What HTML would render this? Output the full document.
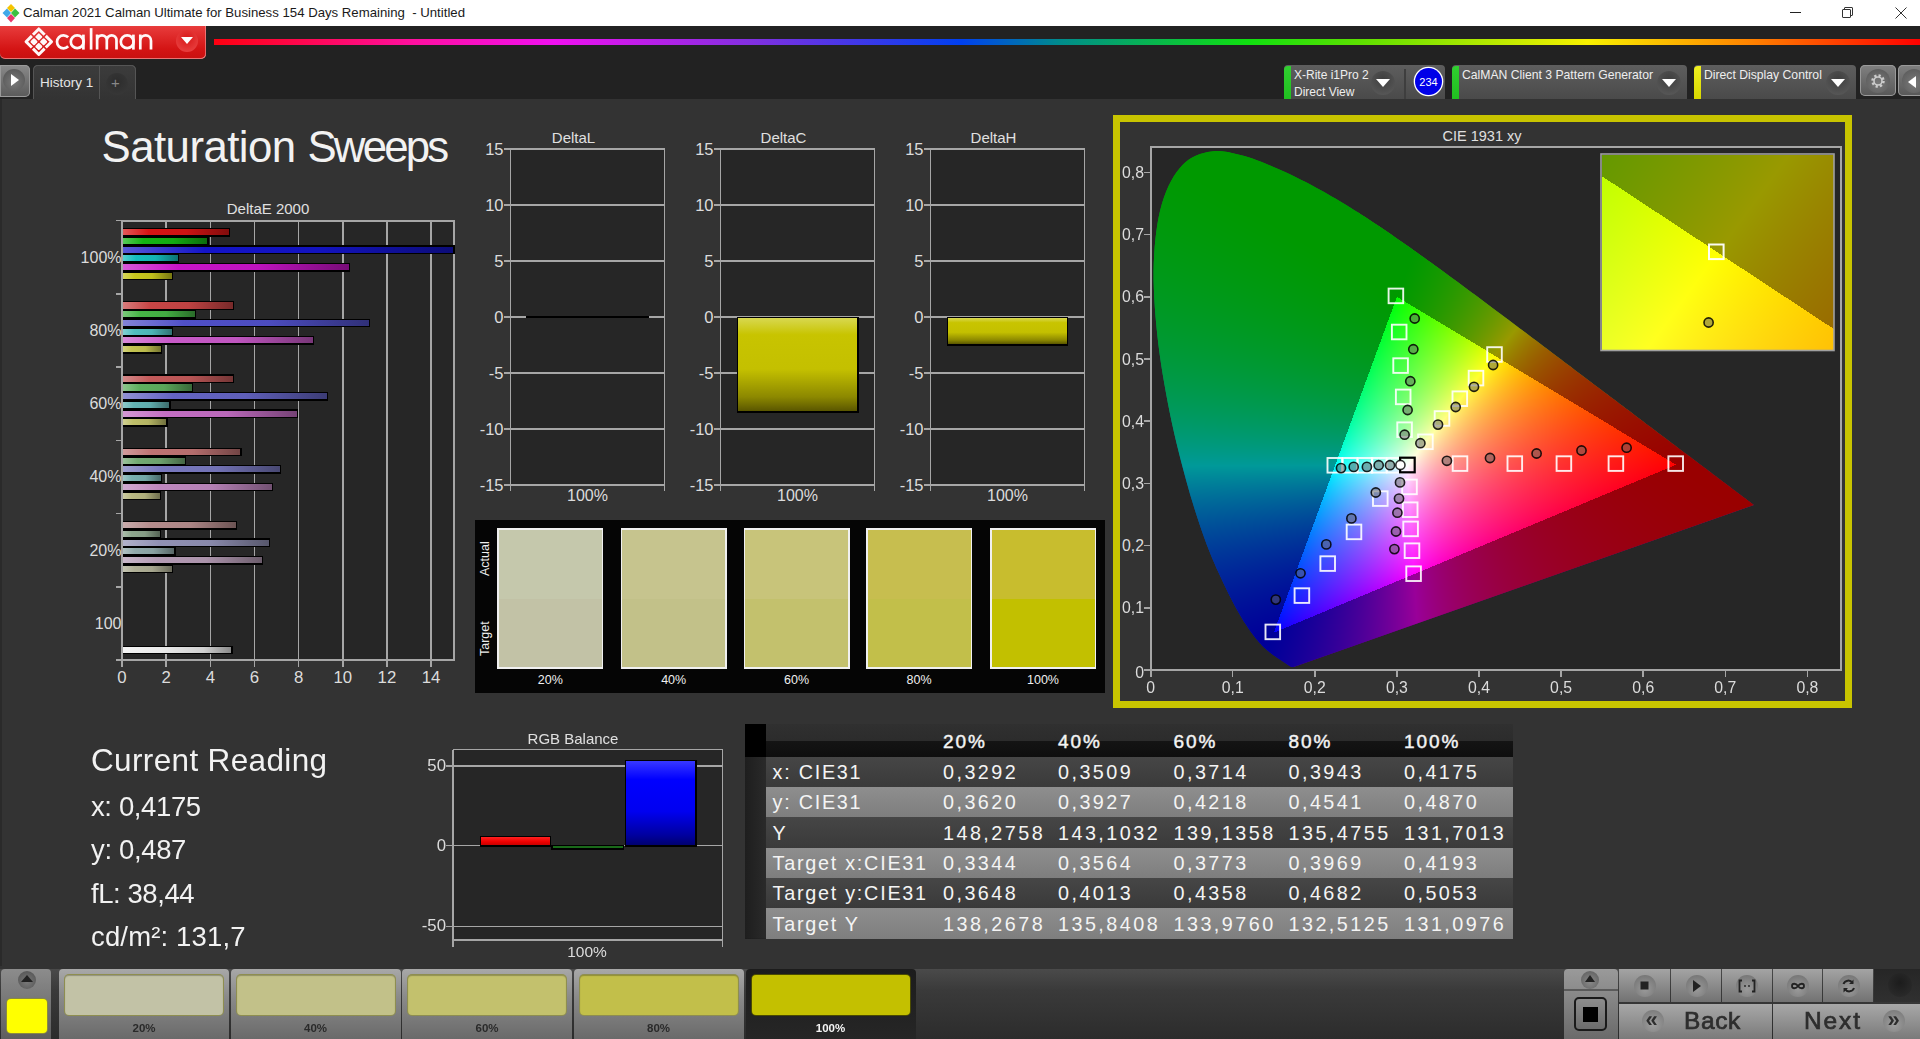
<!DOCTYPE html><html><head><meta charset="utf-8"><style>
html,body{margin:0;padding:0;width:1920px;height:1039px;overflow:hidden;background:#333;}
.t{position:absolute;font-family:"Liberation Sans",sans-serif;white-space:nowrap;line-height:1.15;}
</style></head><body>
<div style="position:absolute;left:0;top:0;width:1920px;height:26px;background:#fff;"></div>
<svg style="position:absolute;left:1px;top:2px" width="20" height="22" viewBox="0 0 20 22">
<path d="M10 2 L14 6 L10 10 L6 6Z" fill="#f5c400"/>
<path d="M14 6.5 L18.5 11 L14 15.5 L10 11Z" fill="#3cc040"/>
<path d="M10 12 L14 16 L10 20.5 L6 16Z" fill="#e8386a"/>
<path d="M6 6.5 L10 11 L6 15.5 L1.5 11Z" fill="#40a8e8"/>
</svg>
<div class="t" style="left:23px;top:5px;font-size:13.2px;color:#1a1a1a;letter-spacing:0px;white-space:pre;">Calman 2021 Calman Ultimate for Business 154 Days Remaining  - Untitled</div>
<div style="position:absolute;left:1790px;top:12px;width:11px;height:1px;background:#222"></div>
<div style="position:absolute;left:1844px;top:6.5px;width:7px;height:7px;border:1px solid #333;border-radius:1px;"></div>
<div style="position:absolute;left:1841.5px;top:9px;width:7px;height:7px;border:1px solid #333;background:#fff;border-radius:1px;"></div>
<svg style="position:absolute;left:1895px;top:6.5px" width="12" height="12"><path d="M0.5 0.5 L11.5 11.5 M11.5 0.5 L0.5 11.5" stroke="#333" stroke-width="1"/></svg>

<div style="position:absolute;left:0;top:26px;width:1920px;height:73px;background:#222;"></div>
<div style="position:absolute;left:0;top:26px;width:206px;height:33px;border-radius:0 0 5px 5px;background:linear-gradient(#e83c3c,#d41414 70%,#c81010);box-shadow:inset 0 -1px 0 rgba(255,180,180,.6), inset -1px 0 0 rgba(255,180,180,.5);"></div>
<svg style="position:absolute;left:0;top:26px" width="206" height="33" viewBox="0 26 206 33">
<g transform="translate(38.8,41.7) rotate(45) scale(1.1)" fill="#fff8f8">
<rect x="-8.2" y="-8.2" width="16.4" height="16.4" fill="none" stroke="#fff8f8" stroke-width="2.7" stroke-linejoin="round" stroke-dasharray="15.0 1.4" stroke-dashoffset="7.5" transform="translate(0,0)"/>
<rect x="-5.6" y="-5.6" width="5.0" height="5.0" rx="0.9"/>
<rect x="0.6" y="-5.6" width="5.0" height="5.0" rx="0.9"/>
<rect x="-5.6" y="0.6" width="5.0" height="5.0" rx="0.9"/>
<rect x="0.6" y="0.6" width="5.0" height="5.0" rx="0.9"/>
</g>
<g fill="none" stroke="#fff8f8" stroke-width="2.7">
<path d="M68.2 37.3 A6.5 6.5 0 1 0 68.2 46.3"/>
<circle cx="77.2" cy="41.8" r="6.4"/>
<path d="M83.4 34.6 V49.6"/>
<path d="M91.1 28.1 V49.6"/>
<path d="M97.1 34.6 V49.6 M97.1 40.2 A4.85 4.85 0 0 1 106.8 40.2 V49.6 M106.8 40.2 A4.85 4.85 0 0 1 116.5 40.2 V49.6"/>
<circle cx="127.2" cy="41.8" r="6.4"/>
<path d="M133.4 34.6 V49.6"/>
<path d="M140.3 34.6 V49.6 M140.3 40.7 A5.35 5.35 0 0 1 151 40.7 V49.6"/>
</g>
</svg>
<div style="position:absolute;left:176px;top:30px;width:22px;height:22px;border-radius:50%;background:radial-gradient(circle at 50% 40%,#d81818,#e84040 80%);"></div>
<svg style="position:absolute;left:181px;top:37px" width="12" height="8"><path d="M0 0 L12 0 L6 7Z" fill="#fff"/></svg>
<div style="position:absolute;left:214px;top:39px;width:1706px;height:6px;background:linear-gradient(90deg,#ff0010 0px,#ff10a0 200px,#f010f0 340px,#8030e0 540px,#0040f0 747px,#008c8c 846px,#10e010 1034px,#60e000 1150px,#f8f000 1374px,#ff8000 1540px,#ff0000 1706px);"></div>

<div style="position:absolute;left:0;top:65px;width:30px;height:31.5px;border-radius:0 5px 5px 0;background:linear-gradient(#8a8a8a,#5a5a5a);box-shadow:inset 0 0 0 1px #9a9a9a;"></div>
<div style="position:absolute;left:3px;top:69px;width:22px;height:22px;border-radius:50%;background:radial-gradient(circle at 50% 60%,#7a7a7a,#505050);"></div>
<svg style="position:absolute;left:11px;top:74px" width="8" height="12"><path d="M0 0 L8 6 L0 12Z" fill="#fff"/></svg>
<div style="position:absolute;left:33px;top:65px;width:103px;height:34px;border-radius:5px 5px 0 0;background:linear-gradient(#3c3c3c,#333);box-shadow:inset 0 1px 0 #555,inset 1px 0 0 #555,inset -1px 0 0 #555;"></div>
<div style="position:absolute;left:99px;top:66px;width:1px;height:33px;background:#555"></div>
<div class="t" style="left:40px;top:75px;font-size:13.5px;color:#e6e6e6;">History 1</div>
<div style="position:absolute;left:106px;top:73px;width:22px;height:22px;border-radius:50%;background:radial-gradient(circle at 50% 40%,#2c2c2c,#3a3a3a);"></div>
<div class="t" style="left:111px;top:74px;font-size:15px;color:#888;">+</div>

<div style="position:absolute;left:1284px;top:65px;width:161px;height:34px;border-radius:4px 4px 0 0;background:linear-gradient(#5e5e5e,#4a4a4a);"></div><div style="position:absolute;left:1284px;top:66px;width:7px;height:33px;border-radius:4px 0 0 0;background:linear-gradient(#30d030,#20c020);"></div>
<div class="t" style="left:1294px;top:67px;font-size:12px;color:#eee;line-height:16.5px;">X-Rite i1Pro 2<br>Direct View</div>
<div style="position:absolute;left:1371px;top:71px;width:24px;height:24px;border-radius:50%;background:radial-gradient(circle at 50% 35%,#3e3e3e,#5a5a5a 90%);"></div><svg style="position:absolute;left:1376px;top:79px" width="14" height="9"><path d="M0 0 L14 0 L7 8Z" fill="#fff"/></svg>
<div style="position:absolute;left:1404px;top:69px;width:2px;height:30px;background:#3e3e3e"></div>
<div style="position:absolute;left:1415px;top:68px;width:27px;height:27px;border-radius:50%;background:#0000e8;box-shadow:0 0 0 1.3px #fff;"></div>
<div class="t" style="left:1415px;top:75.5px;width:27px;text-align:center;font-size:11px;color:#fff;">234</div>
<div style="position:absolute;left:1452px;top:65px;width:235px;height:34px;border-radius:4px 4px 0 0;background:linear-gradient(#5e5e5e,#4a4a4a);"></div><div style="position:absolute;left:1452px;top:66px;width:7px;height:33px;border-radius:4px 0 0 0;background:linear-gradient(#30d030,#20c020);"></div>
<div class="t" style="left:1462px;top:67.5px;font-size:12.2px;color:#eee;">CalMAN Client 3 Pattern Generator</div>
<div style="position:absolute;left:1657px;top:71px;width:24px;height:24px;border-radius:50%;background:radial-gradient(circle at 50% 35%,#3e3e3e,#5a5a5a 90%);"></div><svg style="position:absolute;left:1662px;top:79px" width="14" height="9"><path d="M0 0 L14 0 L7 8Z" fill="#fff"/></svg>
<div style="position:absolute;left:1694px;top:65px;width:162px;height:34px;border-radius:4px 4px 0 0;background:linear-gradient(#5e5e5e,#4a4a4a);"></div><div style="position:absolute;left:1694px;top:66px;width:7px;height:33px;border-radius:4px 0 0 0;background:linear-gradient(#f0f020,#d8d800);"></div>
<div class="t" style="left:1704px;top:67.5px;font-size:12.2px;color:#eee;">Direct Display Control</div>
<div style="position:absolute;left:1826px;top:71px;width:24px;height:24px;border-radius:50%;background:radial-gradient(circle at 50% 35%,#3e3e3e,#5a5a5a 90%);"></div><svg style="position:absolute;left:1831px;top:79px" width="14" height="9"><path d="M0 0 L14 0 L7 8Z" fill="#fff"/></svg>
<div style="position:absolute;left:1860px;top:65px;width:36px;height:31px;border-radius:5px;background:linear-gradient(#808080,#585858);box-shadow:inset 0 0 0 1px #9a9a9a;"></div>
<div style="position:absolute;left:1866px;top:69px;width:24px;height:24px;border-radius:50%;background:radial-gradient(circle at 50% 60%,#7a7a7a,#555);"></div>
<svg style="position:absolute;left:1869px;top:72px" width="18" height="18" viewBox="0 0 18 18"><circle cx="9" cy="9" r="5.5" fill="none" stroke="#ccc" stroke-width="2.5" stroke-dasharray="2.2 2.1"/><circle cx="9" cy="9" r="4" fill="none" stroke="#ccc" stroke-width="1.6"/></svg>
<div style="position:absolute;left:1898px;top:65px;width:30px;height:31px;border-radius:5px;background:linear-gradient(#808080,#585858);box-shadow:inset 0 0 0 1px #9a9a9a;"></div>
<div style="position:absolute;left:1902px;top:69px;width:24px;height:24px;border-radius:50%;background:radial-gradient(circle at 50% 60%,#7a7a7a,#555);"></div>
<svg style="position:absolute;left:1908px;top:76px" width="8" height="12"><path d="M8 0 L0 6 L8 12Z" fill="#fff"/></svg>

<div style="position:absolute;left:0.00px;top:99.00px;width:1920.00px;height:867.00px;background:#333;"></div>
<div style="position:absolute;left:0.00px;top:99.00px;width:2.00px;height:867.00px;background:#2a2a2a;"></div>
<div class="t" style="left:101.50px;top:122.00px;font-size:43.8px;color:#f2f2f2;letter-spacing:-0.55px;">Saturation</div>
<div class="t" style="left:307.50px;top:122.00px;font-size:43.8px;color:#f2f2f2;letter-spacing:-2.85px;">Sweeps</div>
<div class="t" style="left:168.00px;top:200.00px;width:200px;text-align:center;font-size:15px;color:#e0e0e0;">DeltaE 2000</div>
<div style="position:absolute;left:122.00px;top:220.50px;width:332.00px;height:439.50px;background:#262626;"></div>
<div style="position:absolute;left:165.41px;top:220.50px;width:1.50px;height:439.50px;background:#a6a6a6;"></div>
<div style="position:absolute;left:209.57px;top:220.50px;width:1.50px;height:439.50px;background:#a6a6a6;"></div>
<div style="position:absolute;left:253.73px;top:220.50px;width:1.50px;height:439.50px;background:#a6a6a6;"></div>
<div style="position:absolute;left:297.89px;top:220.50px;width:1.50px;height:439.50px;background:#a6a6a6;"></div>
<div style="position:absolute;left:342.05px;top:220.50px;width:1.50px;height:439.50px;background:#a6a6a6;"></div>
<div style="position:absolute;left:386.21px;top:220.50px;width:1.50px;height:439.50px;background:#a6a6a6;"></div>
<div style="position:absolute;left:430.37px;top:220.50px;width:1.50px;height:439.50px;background:#a6a6a6;"></div>
<div style="position:absolute;left:122.00px;top:219.50px;width:333.00px;height:2.00px;background:#a6a6a6;"></div>
<div style="position:absolute;left:453.00px;top:220.50px;width:2.00px;height:439.50px;background:#a6a6a6;"></div>
<div style="position:absolute;left:116.00px;top:219.75px;width:6.00px;height:1.50px;background:#a6a6a6;"></div>
<div style="position:absolute;left:116.00px;top:293.00px;width:6.00px;height:1.50px;background:#a6a6a6;"></div>
<div style="position:absolute;left:116.00px;top:366.25px;width:6.00px;height:1.50px;background:#a6a6a6;"></div>
<div style="position:absolute;left:116.00px;top:439.50px;width:6.00px;height:1.50px;background:#a6a6a6;"></div>
<div style="position:absolute;left:116.00px;top:512.75px;width:6.00px;height:1.50px;background:#a6a6a6;"></div>
<div style="position:absolute;left:116.00px;top:586.00px;width:6.00px;height:1.50px;background:#a6a6a6;"></div>
<div style="position:absolute;left:116.00px;top:659.25px;width:6.00px;height:1.50px;background:#a6a6a6;"></div>
<div class="t" style="left:61.50px;top:248.62px;width:60px;text-align:right;font-size:16px;color:#dcdcdc;">100%</div>
<div class="t" style="left:61.50px;top:321.88px;width:60px;text-align:right;font-size:16px;color:#dcdcdc;">80%</div>
<div class="t" style="left:61.50px;top:395.12px;width:60px;text-align:right;font-size:16px;color:#dcdcdc;">60%</div>
<div class="t" style="left:61.50px;top:468.38px;width:60px;text-align:right;font-size:16px;color:#dcdcdc;">40%</div>
<div class="t" style="left:61.50px;top:541.62px;width:60px;text-align:right;font-size:16px;color:#dcdcdc;">20%</div>
<div class="t" style="left:61.50px;top:614.88px;width:60px;text-align:right;font-size:16px;color:#dcdcdc;">100</div>
<div style="position:absolute;left:122.00px;top:227.90px;width:108.20px;height:8.80px;background:#000;"></div>
<div style="position:absolute;left:122.00px;top:229.20px;width:106.90px;height:6.10px;background:linear-gradient(90deg,rgb(227,90,90),rgb(215,20,20) 25%,rgb(204,19,19) 60%,rgb(129,12,12));"></div>
<div style="position:absolute;left:122.00px;top:236.62px;width:86.60px;height:8.80px;background:#000;"></div>
<div style="position:absolute;left:122.00px;top:237.92px;width:85.30px;height:6.10px;background:linear-gradient(90deg,rgb(90,202,90),rgb(20,180,20) 25%,rgb(19,171,19) 60%,rgb(12,108,12));"></div>
<div style="position:absolute;left:122.00px;top:245.34px;width:332.60px;height:8.80px;background:#000;"></div>
<div style="position:absolute;left:122.00px;top:246.64px;width:331.30px;height:6.10px;background:linear-gradient(90deg,rgb(90,90,216),rgb(20,20,200) 25%,rgb(19,19,190) 60%,rgb(12,12,120));"></div>
<div style="position:absolute;left:122.00px;top:254.06px;width:56.80px;height:8.80px;background:#000;"></div>
<div style="position:absolute;left:122.00px;top:255.36px;width:55.50px;height:6.10px;background:linear-gradient(90deg,rgb(90,209,209),rgb(20,190,190) 25%,rgb(19,180,180) 60%,rgb(12,114,114));"></div>
<div style="position:absolute;left:122.00px;top:262.78px;width:228.10px;height:8.80px;background:#000;"></div>
<div style="position:absolute;left:122.00px;top:264.08px;width:226.80px;height:6.10px;background:linear-gradient(90deg,rgb(216,90,216),rgb(200,20,200) 25%,rgb(190,19,190) 60%,rgb(120,12,120));"></div>
<div style="position:absolute;left:122.00px;top:271.50px;width:51.30px;height:8.80px;background:#000;"></div>
<div style="position:absolute;left:122.00px;top:272.80px;width:50.00px;height:6.10px;background:linear-gradient(90deg,rgb(216,216,97),rgb(200,200,30) 25%,rgb(190,190,28) 60%,rgb(120,120,18));"></div>
<div style="position:absolute;left:122.00px;top:301.15px;width:112.00px;height:8.80px;background:#000;"></div>
<div style="position:absolute;left:122.00px;top:302.45px;width:110.70px;height:6.10px;background:linear-gradient(90deg,rgb(216,125,125),rgb(200,70,70) 25%,rgb(190,66,66) 60%,rgb(120,42,42));"></div>
<div style="position:absolute;left:122.00px;top:309.87px;width:74.40px;height:8.80px;background:#000;"></div>
<div style="position:absolute;left:122.00px;top:311.17px;width:73.10px;height:6.10px;background:linear-gradient(90deg,rgb(125,202,125),rgb(70,180,70) 25%,rgb(66,171,66) 60%,rgb(42,108,42));"></div>
<div style="position:absolute;left:122.00px;top:318.59px;width:248.30px;height:8.80px;background:#000;"></div>
<div style="position:absolute;left:122.00px;top:319.89px;width:247.00px;height:6.10px;background:linear-gradient(90deg,rgb(132,132,216),rgb(80,80,200) 25%,rgb(76,76,190) 60%,rgb(48,48,120));"></div>
<div style="position:absolute;left:122.00px;top:327.31px;width:51.30px;height:8.80px;background:#000;"></div>
<div style="position:absolute;left:122.00px;top:328.61px;width:50.00px;height:6.10px;background:linear-gradient(90deg,rgb(132,209,209),rgb(80,190,190) 25%,rgb(76,180,180) 60%,rgb(48,114,114));"></div>
<div style="position:absolute;left:122.00px;top:336.03px;width:192.00px;height:8.80px;background:#000;"></div>
<div style="position:absolute;left:122.00px;top:337.33px;width:190.70px;height:6.10px;background:linear-gradient(90deg,rgb(216,139,216),rgb(200,90,200) 25%,rgb(190,85,190) 60%,rgb(120,54,120));"></div>
<div style="position:absolute;left:122.00px;top:344.75px;width:40.30px;height:8.80px;background:#000;"></div>
<div style="position:absolute;left:122.00px;top:346.05px;width:39.00px;height:6.10px;background:linear-gradient(90deg,rgb(213,213,132),rgb(195,195,80) 25%,rgb(185,185,76) 60%,rgb(117,117,48));"></div>
<div style="position:absolute;left:122.00px;top:374.40px;width:112.00px;height:8.80px;background:#000;"></div>
<div style="position:absolute;left:122.00px;top:375.70px;width:110.70px;height:6.10px;background:linear-gradient(90deg,rgb(213,139,139),rgb(195,90,90) 25%,rgb(185,85,85) 60%,rgb(117,54,54));"></div>
<div style="position:absolute;left:122.00px;top:383.12px;width:71.10px;height:8.80px;background:#000;"></div>
<div style="position:absolute;left:122.00px;top:384.42px;width:69.80px;height:6.10px;background:linear-gradient(90deg,rgb(143,199,143),rgb(95,175,95) 25%,rgb(90,166,90) 60%,rgb(57,105,57));"></div>
<div style="position:absolute;left:122.00px;top:391.84px;width:206.00px;height:8.80px;background:#000;"></div>
<div style="position:absolute;left:122.00px;top:393.14px;width:204.70px;height:6.10px;background:linear-gradient(90deg,rgb(146,146,213),rgb(100,100,195) 25%,rgb(95,95,185) 60%,rgb(60,60,117));"></div>
<div style="position:absolute;left:122.00px;top:400.56px;width:48.60px;height:8.80px;background:#000;"></div>
<div style="position:absolute;left:122.00px;top:401.86px;width:47.30px;height:6.10px;background:linear-gradient(90deg,rgb(146,202,202),rgb(100,180,180) 25%,rgb(95,171,171) 60%,rgb(60,108,108));"></div>
<div style="position:absolute;left:122.00px;top:409.28px;width:175.80px;height:8.80px;background:#000;"></div>
<div style="position:absolute;left:122.00px;top:410.58px;width:174.50px;height:6.10px;background:linear-gradient(90deg,rgb(213,153,213),rgb(195,110,195) 25%,rgb(185,104,185) 60%,rgb(117,66,117));"></div>
<div style="position:absolute;left:122.00px;top:418.00px;width:45.50px;height:8.80px;background:#000;"></div>
<div style="position:absolute;left:122.00px;top:419.30px;width:44.20px;height:6.10px;background:linear-gradient(90deg,rgb(209,209,150),rgb(190,190,105) 25%,rgb(180,180,99) 60%,rgb(114,114,63));"></div>
<div style="position:absolute;left:122.00px;top:447.65px;width:119.70px;height:8.80px;background:#000;"></div>
<div style="position:absolute;left:122.00px;top:448.95px;width:118.40px;height:6.10px;background:linear-gradient(90deg,rgb(209,157,157),rgb(190,115,115) 25%,rgb(180,109,109) 60%,rgb(114,69,69));"></div>
<div style="position:absolute;left:122.00px;top:456.37px;width:64.30px;height:8.80px;background:#000;"></div>
<div style="position:absolute;left:122.00px;top:457.67px;width:63.00px;height:6.10px;background:linear-gradient(90deg,rgb(157,195,157),rgb(115,170,115) 25%,rgb(109,161,109) 60%,rgb(69,102,69));"></div>
<div style="position:absolute;left:122.00px;top:465.09px;width:159.20px;height:8.80px;background:#000;"></div>
<div style="position:absolute;left:122.00px;top:466.39px;width:157.90px;height:6.10px;background:linear-gradient(90deg,rgb(160,160,209),rgb(120,120,190) 25%,rgb(114,114,180) 60%,rgb(72,72,114));"></div>
<div style="position:absolute;left:122.00px;top:473.81px;width:40.30px;height:8.80px;background:#000;"></div>
<div style="position:absolute;left:122.00px;top:475.11px;width:39.00px;height:6.10px;background:linear-gradient(90deg,rgb(160,199,199),rgb(120,175,175) 25%,rgb(114,166,166) 60%,rgb(72,105,105));"></div>
<div style="position:absolute;left:122.00px;top:482.53px;width:151.20px;height:8.80px;background:#000;"></div>
<div style="position:absolute;left:122.00px;top:483.83px;width:149.90px;height:6.10px;background:linear-gradient(90deg,rgb(209,171,209),rgb(190,135,190) 25%,rgb(180,128,180) 60%,rgb(114,81,114));"></div>
<div style="position:absolute;left:122.00px;top:491.25px;width:39.30px;height:8.80px;background:#000;"></div>
<div style="position:absolute;left:122.00px;top:492.55px;width:38.00px;height:6.10px;background:linear-gradient(90deg,rgb(206,206,167),rgb(185,185,130) 25%,rgb(175,175,123) 60%,rgb(111,111,78));"></div>
<div style="position:absolute;left:122.00px;top:520.90px;width:114.80px;height:8.80px;background:#000;"></div>
<div style="position:absolute;left:122.00px;top:522.20px;width:113.50px;height:6.10px;background:linear-gradient(90deg,rgb(202,174,174),rgb(180,140,140) 25%,rgb(171,133,133) 60%,rgb(108,84,84));"></div>
<div style="position:absolute;left:122.00px;top:529.62px;width:39.30px;height:8.80px;background:#000;"></div>
<div style="position:absolute;left:122.00px;top:530.92px;width:38.00px;height:6.10px;background:linear-gradient(90deg,rgb(174,192,174),rgb(140,165,140) 25%,rgb(133,156,133) 60%,rgb(84,99,84));"></div>
<div style="position:absolute;left:122.00px;top:538.34px;width:148.10px;height:8.80px;background:#000;"></div>
<div style="position:absolute;left:122.00px;top:539.64px;width:146.80px;height:6.10px;background:linear-gradient(90deg,rgb(178,178,202),rgb(145,145,180) 25%,rgb(137,137,171) 60%,rgb(87,87,108));"></div>
<div style="position:absolute;left:122.00px;top:547.06px;width:53.50px;height:8.80px;background:#000;"></div>
<div style="position:absolute;left:122.00px;top:548.36px;width:52.20px;height:6.10px;background:linear-gradient(90deg,rgb(178,195,195),rgb(145,170,170) 25%,rgb(137,161,161) 60%,rgb(87,102,102));"></div>
<div style="position:absolute;left:122.00px;top:555.78px;width:141.30px;height:8.80px;background:#000;"></div>
<div style="position:absolute;left:122.00px;top:557.08px;width:140.00px;height:6.10px;background:linear-gradient(90deg,rgb(202,185,202),rgb(180,155,180) 25%,rgb(171,147,171) 60%,rgb(108,93,108));"></div>
<div style="position:absolute;left:122.00px;top:564.50px;width:51.40px;height:8.80px;background:#000;"></div>
<div style="position:absolute;left:122.00px;top:565.80px;width:50.10px;height:6.10px;background:linear-gradient(90deg,rgb(199,199,181),rgb(175,175,150) 25%,rgb(166,166,142) 60%,rgb(105,105,90));"></div>
<div style="position:absolute;left:122.00px;top:645.70px;width:111.00px;height:8.00px;background:#000;"></div>
<div style="position:absolute;left:122.00px;top:647.00px;width:109.00px;height:5.60px;background:linear-gradient(90deg,#f4f4f4,#e8e8e8 40%,#cfcfcf 75%,#8a8a8a);"></div>
<div style="position:absolute;left:121.00px;top:219.50px;width:2.00px;height:447.50px;background:#a6a6a6;"></div>
<div style="position:absolute;left:116.00px;top:659.00px;width:339.00px;height:2.00px;background:#a6a6a6;"></div>
<div style="position:absolute;left:121.25px;top:660.00px;width:1.50px;height:7.00px;background:#a6a6a6;"></div>
<div class="t" style="left:102.00px;top:668.00px;width:40px;text-align:center;font-size:16.8px;color:#dcdcdc;">0</div>
<div style="position:absolute;left:165.41px;top:660.00px;width:1.50px;height:7.00px;background:#a6a6a6;"></div>
<div class="t" style="left:146.16px;top:668.00px;width:40px;text-align:center;font-size:16.8px;color:#dcdcdc;">2</div>
<div style="position:absolute;left:209.57px;top:660.00px;width:1.50px;height:7.00px;background:#a6a6a6;"></div>
<div class="t" style="left:190.32px;top:668.00px;width:40px;text-align:center;font-size:16.8px;color:#dcdcdc;">4</div>
<div style="position:absolute;left:253.73px;top:660.00px;width:1.50px;height:7.00px;background:#a6a6a6;"></div>
<div class="t" style="left:234.48px;top:668.00px;width:40px;text-align:center;font-size:16.8px;color:#dcdcdc;">6</div>
<div style="position:absolute;left:297.89px;top:660.00px;width:1.50px;height:7.00px;background:#a6a6a6;"></div>
<div class="t" style="left:278.64px;top:668.00px;width:40px;text-align:center;font-size:16.8px;color:#dcdcdc;">8</div>
<div style="position:absolute;left:342.05px;top:660.00px;width:1.50px;height:7.00px;background:#a6a6a6;"></div>
<div class="t" style="left:322.80px;top:668.00px;width:40px;text-align:center;font-size:16.8px;color:#dcdcdc;">10</div>
<div style="position:absolute;left:386.21px;top:660.00px;width:1.50px;height:7.00px;background:#a6a6a6;"></div>
<div class="t" style="left:366.96px;top:668.00px;width:40px;text-align:center;font-size:16.8px;color:#dcdcdc;">12</div>
<div style="position:absolute;left:430.37px;top:660.00px;width:1.50px;height:7.00px;background:#a6a6a6;"></div>
<div class="t" style="left:411.12px;top:668.00px;width:40px;text-align:center;font-size:16.8px;color:#dcdcdc;">14</div>
<div style="position:absolute;left:510.50px;top:149.00px;width:154.00px;height:336.00px;background:#262626;"></div>
<div class="t" style="left:523.50px;top:129.00px;width:100px;text-align:center;font-size:15px;color:#e0e0e0;">DeltaL</div>
<div style="position:absolute;left:503.50px;top:148.25px;width:161.00px;height:1.50px;background:#a6a6a6;"></div>
<div class="t" style="left:453.50px;top:140.20px;width:50px;text-align:right;font-size:16.5px;color:#dcdcdc;">15</div>
<div style="position:absolute;left:503.50px;top:204.25px;width:161.00px;height:1.50px;background:#a6a6a6;"></div>
<div class="t" style="left:453.50px;top:196.20px;width:50px;text-align:right;font-size:16.5px;color:#dcdcdc;">10</div>
<div style="position:absolute;left:503.50px;top:260.25px;width:161.00px;height:1.50px;background:#a6a6a6;"></div>
<div class="t" style="left:453.50px;top:252.20px;width:50px;text-align:right;font-size:16.5px;color:#dcdcdc;">5</div>
<div style="position:absolute;left:503.50px;top:316.25px;width:161.00px;height:1.50px;background:#a6a6a6;"></div>
<div class="t" style="left:453.50px;top:308.20px;width:50px;text-align:right;font-size:16.5px;color:#dcdcdc;">0</div>
<div style="position:absolute;left:503.50px;top:372.25px;width:161.00px;height:1.50px;background:#a6a6a6;"></div>
<div class="t" style="left:453.50px;top:364.20px;width:50px;text-align:right;font-size:16.5px;color:#dcdcdc;">-5</div>
<div style="position:absolute;left:503.50px;top:428.25px;width:161.00px;height:1.50px;background:#a6a6a6;"></div>
<div class="t" style="left:453.50px;top:420.20px;width:50px;text-align:right;font-size:16.5px;color:#dcdcdc;">-10</div>
<div style="position:absolute;left:503.50px;top:484.25px;width:161.00px;height:1.50px;background:#a6a6a6;"></div>
<div class="t" style="left:453.50px;top:476.20px;width:50px;text-align:right;font-size:16.5px;color:#dcdcdc;">-15</div>
<div style="position:absolute;left:509.75px;top:149.00px;width:1.50px;height:342.00px;background:#a6a6a6;"></div>
<div style="position:absolute;left:663.75px;top:149.00px;width:1.50px;height:342.00px;background:#a6a6a6;"></div>
<div class="t" style="left:547.50px;top:486.50px;width:80px;text-align:center;font-size:16px;color:#dcdcdc;">100%</div>
<div style="position:absolute;left:720.50px;top:149.00px;width:154.00px;height:336.00px;background:#262626;"></div>
<div class="t" style="left:733.50px;top:129.00px;width:100px;text-align:center;font-size:15px;color:#e0e0e0;">DeltaC</div>
<div style="position:absolute;left:713.50px;top:148.25px;width:161.00px;height:1.50px;background:#a6a6a6;"></div>
<div class="t" style="left:663.50px;top:140.20px;width:50px;text-align:right;font-size:16.5px;color:#dcdcdc;">15</div>
<div style="position:absolute;left:713.50px;top:204.25px;width:161.00px;height:1.50px;background:#a6a6a6;"></div>
<div class="t" style="left:663.50px;top:196.20px;width:50px;text-align:right;font-size:16.5px;color:#dcdcdc;">10</div>
<div style="position:absolute;left:713.50px;top:260.25px;width:161.00px;height:1.50px;background:#a6a6a6;"></div>
<div class="t" style="left:663.50px;top:252.20px;width:50px;text-align:right;font-size:16.5px;color:#dcdcdc;">5</div>
<div style="position:absolute;left:713.50px;top:316.25px;width:161.00px;height:1.50px;background:#a6a6a6;"></div>
<div class="t" style="left:663.50px;top:308.20px;width:50px;text-align:right;font-size:16.5px;color:#dcdcdc;">0</div>
<div style="position:absolute;left:713.50px;top:372.25px;width:161.00px;height:1.50px;background:#a6a6a6;"></div>
<div class="t" style="left:663.50px;top:364.20px;width:50px;text-align:right;font-size:16.5px;color:#dcdcdc;">-5</div>
<div style="position:absolute;left:713.50px;top:428.25px;width:161.00px;height:1.50px;background:#a6a6a6;"></div>
<div class="t" style="left:663.50px;top:420.20px;width:50px;text-align:right;font-size:16.5px;color:#dcdcdc;">-10</div>
<div style="position:absolute;left:713.50px;top:484.25px;width:161.00px;height:1.50px;background:#a6a6a6;"></div>
<div class="t" style="left:663.50px;top:476.20px;width:50px;text-align:right;font-size:16.5px;color:#dcdcdc;">-15</div>
<div style="position:absolute;left:719.75px;top:149.00px;width:1.50px;height:342.00px;background:#a6a6a6;"></div>
<div style="position:absolute;left:873.75px;top:149.00px;width:1.50px;height:342.00px;background:#a6a6a6;"></div>
<div class="t" style="left:757.50px;top:486.50px;width:80px;text-align:center;font-size:16px;color:#dcdcdc;">100%</div>
<div style="position:absolute;left:930.50px;top:149.00px;width:154.00px;height:336.00px;background:#262626;"></div>
<div class="t" style="left:943.50px;top:129.00px;width:100px;text-align:center;font-size:15px;color:#e0e0e0;">DeltaH</div>
<div style="position:absolute;left:923.50px;top:148.25px;width:161.00px;height:1.50px;background:#a6a6a6;"></div>
<div class="t" style="left:873.50px;top:140.20px;width:50px;text-align:right;font-size:16.5px;color:#dcdcdc;">15</div>
<div style="position:absolute;left:923.50px;top:204.25px;width:161.00px;height:1.50px;background:#a6a6a6;"></div>
<div class="t" style="left:873.50px;top:196.20px;width:50px;text-align:right;font-size:16.5px;color:#dcdcdc;">10</div>
<div style="position:absolute;left:923.50px;top:260.25px;width:161.00px;height:1.50px;background:#a6a6a6;"></div>
<div class="t" style="left:873.50px;top:252.20px;width:50px;text-align:right;font-size:16.5px;color:#dcdcdc;">5</div>
<div style="position:absolute;left:923.50px;top:316.25px;width:161.00px;height:1.50px;background:#a6a6a6;"></div>
<div class="t" style="left:873.50px;top:308.20px;width:50px;text-align:right;font-size:16.5px;color:#dcdcdc;">0</div>
<div style="position:absolute;left:923.50px;top:372.25px;width:161.00px;height:1.50px;background:#a6a6a6;"></div>
<div class="t" style="left:873.50px;top:364.20px;width:50px;text-align:right;font-size:16.5px;color:#dcdcdc;">-5</div>
<div style="position:absolute;left:923.50px;top:428.25px;width:161.00px;height:1.50px;background:#a6a6a6;"></div>
<div class="t" style="left:873.50px;top:420.20px;width:50px;text-align:right;font-size:16.5px;color:#dcdcdc;">-10</div>
<div style="position:absolute;left:923.50px;top:484.25px;width:161.00px;height:1.50px;background:#a6a6a6;"></div>
<div class="t" style="left:873.50px;top:476.20px;width:50px;text-align:right;font-size:16.5px;color:#dcdcdc;">-15</div>
<div style="position:absolute;left:929.75px;top:149.00px;width:1.50px;height:342.00px;background:#a6a6a6;"></div>
<div style="position:absolute;left:1083.75px;top:149.00px;width:1.50px;height:342.00px;background:#a6a6a6;"></div>
<div class="t" style="left:967.50px;top:486.50px;width:80px;text-align:center;font-size:16px;color:#dcdcdc;">100%</div>
<div style="position:absolute;left:525.80px;top:316.00px;width:123.00px;height:2.20px;background:#000;"></div>
<div style="position:absolute;left:736.50px;top:316.50px;width:122.00px;height:96.50px;background:#000;"></div><div style="position:absolute;left:738.00px;top:317.50px;width:119.00px;height:93.50px;background:linear-gradient(#d8d850,#c8c400 18%,#c4c000 55%,#8c8800 85%,#5a5600);"></div>
<div style="position:absolute;left:946.70px;top:316.50px;width:121.80px;height:29.30px;background:#000;"></div><div style="position:absolute;left:948.20px;top:317.50px;width:118.80px;height:26.30px;background:linear-gradient(#d8d850,#c8c400 18%,#c4c000 55%,#8c8800 85%,#5a5600);"></div>
<div style="position:absolute;left:475.00px;top:520.00px;width:630.00px;height:173.00px;background:#050505;"></div>
<div class="t" style="left:477px;top:549px;width:18px;height:18px;transform:rotate(-90deg);font-size:12.5px;color:#eee;white-space:nowrap;"><span style="position:absolute;left:-9px;top:1px">Actual</span></div>
<div class="t" style="left:477px;top:629px;width:18px;height:18px;transform:rotate(-90deg);font-size:12.5px;color:#eee;white-space:nowrap;"><span style="position:absolute;left:-9px;top:1px">Target</span></div>
<div style="position:absolute;left:497.30px;top:528.30px;width:106.00px;height:141.00px;background:#f0f0f0;"></div>
<div style="position:absolute;left:498.80px;top:529.80px;width:103.00px;height:69.00px;background:#c5c8ac;"></div>
<div style="position:absolute;left:498.80px;top:598.80px;width:103.00px;height:68.70px;background:#c2c2a6;"></div>
<div class="t" style="left:500.30px;top:673.00px;width:100px;text-align:center;font-size:12.5px;color:#f0f0f0;">20%</div>
<div style="position:absolute;left:620.70px;top:528.30px;width:106.00px;height:141.00px;background:#f0f0f0;"></div>
<div style="position:absolute;left:622.20px;top:529.80px;width:103.00px;height:69.00px;background:#c6c48e;"></div>
<div style="position:absolute;left:622.20px;top:598.80px;width:103.00px;height:68.70px;background:#c2c189;"></div>
<div class="t" style="left:623.70px;top:673.00px;width:100px;text-align:center;font-size:12.5px;color:#f0f0f0;">40%</div>
<div style="position:absolute;left:743.50px;top:528.30px;width:106.00px;height:141.00px;background:#f0f0f0;"></div>
<div style="position:absolute;left:745.00px;top:529.80px;width:103.00px;height:69.00px;background:#c8c47a;"></div>
<div style="position:absolute;left:745.00px;top:598.80px;width:103.00px;height:68.70px;background:#c3c16d;"></div>
<div class="t" style="left:746.50px;top:673.00px;width:100px;text-align:center;font-size:12.5px;color:#f0f0f0;">60%</div>
<div style="position:absolute;left:866.00px;top:528.30px;width:106.00px;height:141.00px;background:#f0f0f0;"></div>
<div style="position:absolute;left:867.50px;top:529.80px;width:103.00px;height:69.00px;background:#c7be4f;"></div>
<div style="position:absolute;left:867.50px;top:598.80px;width:103.00px;height:68.70px;background:#c2bf4a;"></div>
<div class="t" style="left:869.00px;top:673.00px;width:100px;text-align:center;font-size:12.5px;color:#f0f0f0;">80%</div>
<div style="position:absolute;left:990.00px;top:528.30px;width:106.00px;height:141.00px;background:#f0f0f0;"></div>
<div style="position:absolute;left:991.50px;top:529.80px;width:103.00px;height:69.00px;background:#c8bd2e;"></div>
<div style="position:absolute;left:991.50px;top:598.80px;width:103.00px;height:68.70px;background:#c2c000;"></div>
<div class="t" style="left:993.00px;top:673.00px;width:100px;text-align:center;font-size:12.5px;color:#f0f0f0;">100%</div>
<div style="position:absolute;left:1112.50px;top:114.50px;width:739.50px;height:593.50px;box-sizing:border-box;border:7.8px solid #c8c400;background:#333;"></div>
<div class="t" style="left:1382.00px;top:128.00px;width:200px;text-align:center;font-size:14.5px;color:#e0e0e0;">CIE 1931 xy</div>
<div style="position:absolute;left:1151.00px;top:147.00px;width:690.00px;height:523.00px;background:#262626;"></div>
<svg style="position:absolute;left:0;top:0" width="1920" height="1039"><linearGradient id="lg" gradientUnits="userSpaceOnUse" x1="0" y1="150" x2="0" y2="670"><stop offset="0" stop-color="#009a00"/><stop offset="0.55" stop-color="#008c70"/><stop offset="0.62" stop-color="#006890"/><stop offset="1" stop-color="#1000b0"/></linearGradient><path d="M1293.5 666.9 L1293.5 666.9 L1293.5 666.9 L1293.5 666.9 L1293.4 666.9 L1293.4 666.9 L1293.4 666.9 L1293.3 666.9 L1293.3 667.0 L1293.2 667.0 L1293.2 667.0 L1293.2 667.0 L1293.1 667.0 L1293.1 667.0 L1293.0 667.0 L1292.9 667.0 L1292.9 667.0 L1292.8 667.0 L1292.8 667.0 L1292.7 667.0 L1292.6 667.0 L1292.6 667.0 L1292.5 667.0 L1292.4 667.0 L1292.3 667.0 L1292.2 667.0 L1292.1 667.0 L1292.0 667.0 L1291.8 666.9 L1291.7 666.9 L1291.6 666.9 L1291.4 666.9 L1291.3 666.8 L1291.2 666.8 L1291.1 666.7 L1291.0 666.7 L1290.9 666.6 L1290.8 666.6 L1290.7 666.5 L1290.5 666.5 L1290.4 666.4 L1290.3 666.3 L1290.2 666.2 L1290.0 666.2 L1289.9 666.1 L1289.7 666.0 L1289.6 665.9 L1289.4 665.8 L1289.3 665.7 L1289.1 665.6 L1288.9 665.5 L1288.7 665.4 L1288.5 665.2 L1288.3 665.1 L1288.1 664.9 L1287.9 664.8 L1287.6 664.7 L1287.4 664.5 L1287.2 664.3 L1286.9 664.2 L1286.7 664.0 L1286.4 663.8 L1286.1 663.6 L1285.9 663.4 L1285.6 663.2 L1285.3 663.0 L1285.0 662.8 L1284.6 662.6 L1284.3 662.4 L1284.0 662.2 L1283.6 661.9 L1283.3 661.7 L1282.9 661.4 L1282.5 661.1 L1282.0 660.9 L1281.6 660.6 L1281.1 660.3 L1280.7 660.0 L1280.2 659.7 L1279.7 659.3 L1279.2 659.0 L1278.6 658.6 L1278.1 658.3 L1277.6 657.9 L1277.0 657.6 L1276.4 657.2 L1275.8 656.8 L1275.2 656.3 L1274.6 655.9 L1273.9 655.4 L1273.2 654.9 L1272.6 654.4 L1271.8 653.9 L1271.1 653.4 L1270.4 652.8 L1269.6 652.2 L1268.8 651.5 L1268.0 650.9 L1267.2 650.2 L1266.4 649.5 L1265.6 648.8 L1264.7 648.0 L1263.8 647.2 L1262.8 646.2 L1261.8 645.2 L1260.8 644.1 L1259.7 642.9 L1258.6 641.7 L1257.5 640.3 L1256.3 638.9 L1255.1 637.4 L1253.8 635.8 L1252.5 634.0 L1251.1 632.2 L1249.8 630.3 L1248.3 628.3 L1246.9 626.1 L1245.4 623.8 L1243.8 621.4 L1242.2 618.8 L1240.6 616.0 L1238.9 613.0 L1237.1 609.9 L1235.3 606.7 L1233.5 603.3 L1231.6 599.6 L1229.6 595.8 L1227.6 591.8 L1225.6 587.5 L1223.4 582.9 L1221.2 578.2 L1218.9 573.3 L1216.5 568.2 L1214.2 562.8 L1211.8 557.2 L1209.4 551.3 L1207.0 545.2 L1204.6 538.7 L1202.2 532.0 L1199.8 525.0 L1197.4 517.8 L1195.0 510.3 L1192.6 502.6 L1190.2 494.7 L1187.9 486.5 L1185.5 478.1 L1183.2 469.3 L1180.8 460.3 L1178.5 451.1 L1176.2 441.8 L1174.0 432.3 L1171.9 422.8 L1169.9 413.3 L1168.0 403.7 L1166.2 394.0 L1164.4 384.1 L1162.7 374.2 L1161.1 364.2 L1159.7 354.4 L1158.4 344.6 L1157.3 335.1 L1156.4 325.7 L1155.5 316.3 L1154.8 307.0 L1154.3 297.7 L1153.9 288.7 L1153.6 279.8 L1153.6 271.1 L1153.8 262.7 L1154.2 254.5 L1154.7 246.5 L1155.5 238.6 L1156.4 230.9 L1157.5 223.5 L1158.8 216.4 L1160.3 209.7 L1162.0 203.4 L1163.9 197.4 L1166.1 191.7 L1168.4 186.3 L1171.0 181.3 L1173.7 176.6 L1176.5 172.3 L1179.5 168.4 L1182.5 164.9 L1185.7 161.9 L1189.1 159.4 L1192.7 157.2 L1196.3 155.5 L1200.1 154.0 L1203.9 152.9 L1207.7 152.0 L1211.6 151.4 L1215.5 151.0 L1219.5 151.1 L1223.6 151.5 L1227.7 152.1 L1231.9 153.0 L1236.0 153.9 L1240.2 155.0 L1244.4 156.1 L1248.5 157.3 L1252.7 158.6 L1256.9 160.2 L1261.1 161.8 L1265.3 163.5 L1269.4 165.2 L1273.5 167.0 L1277.6 168.7 L1281.6 170.5 L1285.6 172.3 L1289.6 174.1 L1293.5 176.0 L1297.4 177.9 L1301.3 179.9 L1305.1 181.8 L1309.0 183.8 L1312.8 185.9 L1316.6 187.9 L1320.4 190.0 L1324.1 192.1 L1327.9 194.3 L1331.6 196.4 L1335.4 198.6 L1339.1 200.8 L1342.8 203.1 L1346.6 205.3 L1350.3 207.6 L1354.0 210.0 L1357.7 212.3 L1361.4 214.7 L1365.1 217.1 L1368.8 219.5 L1372.5 221.9 L1376.2 224.4 L1379.9 226.8 L1383.5 229.3 L1387.2 231.8 L1390.9 234.3 L1394.5 236.9 L1398.2 239.4 L1401.9 241.9 L1405.5 244.5 L1409.2 247.1 L1412.9 249.7 L1416.5 252.3 L1420.2 254.9 L1423.9 257.5 L1427.5 260.2 L1431.2 262.8 L1434.9 265.5 L1438.5 268.1 L1442.2 270.8 L1445.9 273.5 L1449.6 276.2 L1453.2 278.9 L1456.9 281.6 L1460.6 284.3 L1464.2 287.0 L1467.9 289.7 L1471.6 292.4 L1475.2 295.1 L1478.9 297.8 L1482.5 300.6 L1486.1 303.3 L1489.8 306.0 L1493.4 308.7 L1497.1 311.4 L1500.7 314.1 L1504.4 316.9 L1508.0 319.6 L1511.6 322.3 L1515.2 325.0 L1518.8 327.7 L1522.4 330.4 L1526.0 333.1 L1529.5 335.8 L1533.1 338.4 L1536.6 341.1 L1540.2 343.8 L1543.7 346.4 L1547.2 349.1 L1550.7 351.7 L1554.2 354.4 L1557.7 357.0 L1561.1 359.6 L1564.5 362.2 L1568.0 364.8 L1571.4 367.3 L1574.7 369.9 L1578.1 372.4 L1581.5 375.0 L1584.8 377.5 L1588.1 380.0 L1591.4 382.5 L1594.6 384.9 L1597.9 387.4 L1601.1 389.8 L1604.3 392.2 L1607.5 394.6 L1610.6 396.9 L1613.7 399.3 L1616.8 401.6 L1619.8 403.9 L1622.8 406.1 L1625.8 408.4 L1628.8 410.6 L1631.7 412.8 L1634.5 415.0 L1637.4 417.2 L1640.2 419.3 L1642.9 421.3 L1645.6 423.4 L1648.2 425.4 L1650.8 427.3 L1653.3 429.2 L1655.8 431.1 L1658.2 432.9 L1660.7 434.8 L1663.0 436.5 L1665.4 438.3 L1667.7 440.0 L1670.0 441.8 L1672.2 443.5 L1674.4 445.1 L1676.6 446.8 L1678.7 448.4 L1680.8 449.9 L1682.8 451.4 L1684.7 452.9 L1686.7 454.3 L1688.5 455.7 L1690.4 457.1 L1692.1 458.4 L1693.9 459.7 L1695.6 461.0 L1697.2 462.3 L1698.8 463.5 L1700.4 464.7 L1701.9 465.8 L1703.4 466.9 L1704.8 468.0 L1706.3 469.1 L1707.6 470.1 L1709.0 471.1 L1710.3 472.1 L1711.5 473.1 L1712.7 474.0 L1713.9 474.9 L1715.1 475.8 L1716.2 476.6 L1717.3 477.4 L1718.3 478.2 L1719.4 479.0 L1720.4 479.8 L1721.3 480.5 L1722.3 481.2 L1723.2 481.9 L1724.1 482.5 L1724.9 483.2 L1725.8 483.8 L1726.6 484.5 L1727.4 485.1 L1728.2 485.6 L1728.9 486.2 L1729.7 486.8 L1730.4 487.3 L1731.1 487.9 L1731.8 488.4 L1732.5 488.9 L1733.1 489.4 L1733.8 489.9 L1734.4 490.4 L1735.0 490.8 L1735.6 491.3 L1736.2 491.7 L1736.8 492.2 L1737.3 492.6 L1737.8 493.0 L1738.3 493.3 L1738.8 493.7 L1739.3 494.1 L1739.8 494.4 L1740.3 494.8 L1740.9 495.3 L1741.6 495.8 L1742.3 496.3 L1743.0 496.9 L1743.8 497.5 L1744.6 498.0 L1745.3 498.6 L1746.0 499.1 L1746.6 499.6 L1747.2 500.0 L1747.6 500.3 L1748.1 500.7 L1748.5 501.0 L1748.8 501.2 L1749.2 501.5 L1749.6 501.8 L1749.9 502.1 L1750.3 502.4 L1750.7 502.6 L1751.1 502.9 L1751.5 503.2 L1751.8 503.5 L1752.2 503.7 L1752.5 504.0 L1752.7 504.2 L1752.9 504.3 L1753.1 504.5 L1753.3 504.6 L1753.4 504.7 L1753.5 504.8 L1753.6 504.9 L1753.7 504.9 L1753.8 505.0Z" fill="url(#lg)"/><linearGradient id="rg" gradientUnits="userSpaceOnUse" x1="1400" y1="300" x2="1700" y2="480"><stop offset="0" stop-color="#2a9000"/><stop offset="0.4" stop-color="#8a7000"/><stop offset="1" stop-color="#a00000"/></linearGradient><polygon points="1357.7,212.3 1361.4,214.7 1365.1,217.1 1368.8,219.5 1372.5,221.9 1376.2,224.4 1379.9,226.8 1383.5,229.3 1387.2,231.8 1390.9,234.3 1394.5,236.9 1398.2,239.4 1401.9,241.9 1405.5,244.5 1409.2,247.1 1412.9,249.7 1416.5,252.3 1420.2,254.9 1423.9,257.5 1427.5,260.2 1431.2,262.8 1434.9,265.5 1438.5,268.1 1442.2,270.8 1445.9,273.5 1449.6,276.2 1453.2,278.9 1456.9,281.6 1460.6,284.3 1464.2,287.0 1467.9,289.7 1471.6,292.4 1475.2,295.1 1478.9,297.8 1482.5,300.6 1486.1,303.3 1489.8,306.0 1493.4,308.7 1497.1,311.4 1500.7,314.1 1504.4,316.9 1508.0,319.6 1511.6,322.3 1515.2,325.0 1518.8,327.7 1522.4,330.4 1526.0,333.1 1529.5,335.8 1533.1,338.4 1536.6,341.1 1540.2,343.8 1543.7,346.4 1547.2,349.1 1550.7,351.7 1554.2,354.4 1557.7,357.0 1561.1,359.6 1564.5,362.2 1568.0,364.8 1571.4,367.3 1574.7,369.9 1578.1,372.4 1581.5,375.0 1584.8,377.5 1588.1,380.0 1591.4,382.5 1594.6,384.9 1597.9,387.4 1601.1,389.8 1604.3,392.2 1607.5,394.6 1610.6,396.9 1613.7,399.3 1616.8,401.6 1619.8,403.9 1622.8,406.1 1625.8,408.4 1628.8,410.6 1631.7,412.8 1634.5,415.0 1637.4,417.2 1640.2,419.3 1642.9,421.3 1645.6,423.4 1648.2,425.4 1650.8,427.3 1653.3,429.2 1655.8,431.1 1658.2,432.9 1660.7,434.8 1663.0,436.5 1665.4,438.3 1667.7,440.0 1670.0,441.8 1672.2,443.5 1674.4,445.1 1676.6,446.8 1678.7,448.4 1680.8,449.9 1682.8,451.4 1684.7,452.9 1686.7,454.3 1688.5,455.7 1690.4,457.1 1692.1,458.4 1693.9,459.7 1695.6,461.0 1697.2,462.3 1698.8,463.5 1700.4,464.7 1701.9,465.8 1703.4,466.9 1704.8,468.0 1706.3,469.1 1707.6,470.1 1709.0,471.1 1710.3,472.1 1711.5,473.1 1712.7,474.0 1713.9,474.9 1715.1,475.8 1716.2,476.6 1717.3,477.4 1718.3,478.2 1719.4,479.0 1720.4,479.8 1721.3,480.5 1722.3,481.2 1723.2,481.9 1724.1,482.5 1724.9,483.2 1725.8,483.8 1726.6,484.5 1727.4,485.1 1728.2,485.6 1728.9,486.2 1729.7,486.8 1730.4,487.3 1731.1,487.9 1731.8,488.4 1732.5,488.9 1733.1,489.4 1733.8,489.9 1734.4,490.4 1735.0,490.8 1735.6,491.3 1736.2,491.7 1736.8,492.2 1737.3,492.6 1737.8,493.0 1738.3,493.3 1738.8,493.7 1739.3,494.1 1739.8,494.4 1740.3,494.8 1740.9,495.3 1741.6,495.8 1742.3,496.3 1743.0,496.9 1743.8,497.5 1744.6,498.0 1745.3,498.6 1746.0,499.1 1746.6,499.6 1747.2,500.0 1747.6,500.3 1748.1,500.7 1748.5,501.0 1748.8,501.2 1749.2,501.5 1749.6,501.8 1749.9,502.1 1750.3,502.4 1750.7,502.6 1751.1,502.9 1751.5,503.2 1751.8,503.5 1752.2,503.7 1752.5,504.0 1752.7,504.2 1752.9,504.3 1753.1,504.5 1753.3,504.6 1753.4,504.7 1753.5,504.8 1753.6,504.9 1753.7,504.9 1753.8,505.0 1676.0,464.7 1396.9,296.8" fill="url(#rg)"/><polygon points="1273.8,632.7 1676.0,464.7 1753.8,505.0 1293.5,666.9" fill="#800050"/><linearGradient id="gffd000" gradientUnits="userSpaceOnUse" x1="1407.3" y1="465.4" x2="1536.5" y2="380.8"><stop offset="0" stop-color="#fff"/><stop offset="1" stop-color="#ffd000"/></linearGradient><polygon points="1407.3,465.4 1676.0,464.7 1396.9,296.8" fill="url(#gffd000)"/><linearGradient id="g00ffd0" gradientUnits="userSpaceOnUse" x1="1407.3" y1="465.4" x2="1335.3" y2="464.7"><stop offset="0" stop-color="#fff"/><stop offset="1" stop-color="#00ffd0"/></linearGradient><polygon points="1407.3,465.4 1396.9,296.8 1273.8,632.7" fill="url(#g00ffd0)"/><linearGradient id="gff00c0" gradientUnits="userSpaceOnUse" x1="1407.3" y1="465.4" x2="1474.9" y2="548.7"><stop offset="0" stop-color="#fff"/><stop offset="1" stop-color="#ff00c0"/></linearGradient><polygon points="1407.3,465.4 1273.8,632.7 1676.0,464.7" fill="url(#gff00c0)"/></svg>
<canvas id="cv" width="690" height="523" style="position:absolute;left:1151px;top:147px;"></canvas>
<div style="position:absolute;left:1150.00px;top:146.00px;width:692.00px;height:1.60px;background:#a6a6a6;"></div>
<div style="position:absolute;left:1840.40px;top:146.00px;width:1.60px;height:524.00px;background:#a6a6a6;"></div>
<div style="position:absolute;left:1150.00px;top:146.00px;width:2.00px;height:531.00px;background:#a6a6a6;"></div>
<div style="position:absolute;left:1144.00px;top:669.00px;width:698.00px;height:2.00px;background:#a6a6a6;"></div>
<div style="position:absolute;left:1149.80px;top:670.00px;width:1.60px;height:7.00px;background:#a6a6a6;"></div>
<div class="t" style="left:1125.60px;top:679.00px;width:50px;text-align:center;font-size:15.8px;color:#dcdcdc;">0</div>
<div style="position:absolute;left:1144.00px;top:669.20px;width:7.00px;height:1.60px;background:#a6a6a6;"></div>
<div class="t" style="left:1094.00px;top:663.50px;width:50px;text-align:right;font-size:15.8px;color:#dcdcdc;">0</div>
<div style="position:absolute;left:1231.90px;top:670.00px;width:1.60px;height:7.00px;background:#a6a6a6;"></div>
<div class="t" style="left:1207.70px;top:679.00px;width:50px;text-align:center;font-size:15.8px;color:#dcdcdc;">0,1</div>
<div style="position:absolute;left:1144.00px;top:607.00px;width:7.00px;height:1.60px;background:#a6a6a6;"></div>
<div class="t" style="left:1094.00px;top:599.30px;width:50px;text-align:right;font-size:15.8px;color:#dcdcdc;">0,1</div>
<div style="position:absolute;left:1314.00px;top:670.00px;width:1.60px;height:7.00px;background:#a6a6a6;"></div>
<div class="t" style="left:1289.80px;top:679.00px;width:50px;text-align:center;font-size:15.8px;color:#dcdcdc;">0,2</div>
<div style="position:absolute;left:1144.00px;top:544.80px;width:7.00px;height:1.60px;background:#a6a6a6;"></div>
<div class="t" style="left:1094.00px;top:537.10px;width:50px;text-align:right;font-size:15.8px;color:#dcdcdc;">0,2</div>
<div style="position:absolute;left:1396.10px;top:670.00px;width:1.60px;height:7.00px;background:#a6a6a6;"></div>
<div class="t" style="left:1371.90px;top:679.00px;width:50px;text-align:center;font-size:15.8px;color:#dcdcdc;">0,3</div>
<div style="position:absolute;left:1144.00px;top:482.60px;width:7.00px;height:1.60px;background:#a6a6a6;"></div>
<div class="t" style="left:1094.00px;top:474.90px;width:50px;text-align:right;font-size:15.8px;color:#dcdcdc;">0,3</div>
<div style="position:absolute;left:1478.20px;top:670.00px;width:1.60px;height:7.00px;background:#a6a6a6;"></div>
<div class="t" style="left:1454.00px;top:679.00px;width:50px;text-align:center;font-size:15.8px;color:#dcdcdc;">0,4</div>
<div style="position:absolute;left:1144.00px;top:420.40px;width:7.00px;height:1.60px;background:#a6a6a6;"></div>
<div class="t" style="left:1094.00px;top:412.70px;width:50px;text-align:right;font-size:15.8px;color:#dcdcdc;">0,4</div>
<div style="position:absolute;left:1560.30px;top:670.00px;width:1.60px;height:7.00px;background:#a6a6a6;"></div>
<div class="t" style="left:1536.10px;top:679.00px;width:50px;text-align:center;font-size:15.8px;color:#dcdcdc;">0,5</div>
<div style="position:absolute;left:1144.00px;top:358.20px;width:7.00px;height:1.60px;background:#a6a6a6;"></div>
<div class="t" style="left:1094.00px;top:350.50px;width:50px;text-align:right;font-size:15.8px;color:#dcdcdc;">0,5</div>
<div style="position:absolute;left:1642.40px;top:670.00px;width:1.60px;height:7.00px;background:#a6a6a6;"></div>
<div class="t" style="left:1618.20px;top:679.00px;width:50px;text-align:center;font-size:15.8px;color:#dcdcdc;">0,6</div>
<div style="position:absolute;left:1144.00px;top:296.00px;width:7.00px;height:1.60px;background:#a6a6a6;"></div>
<div class="t" style="left:1094.00px;top:288.30px;width:50px;text-align:right;font-size:15.8px;color:#dcdcdc;">0,6</div>
<div style="position:absolute;left:1724.50px;top:670.00px;width:1.60px;height:7.00px;background:#a6a6a6;"></div>
<div class="t" style="left:1700.30px;top:679.00px;width:50px;text-align:center;font-size:15.8px;color:#dcdcdc;">0,7</div>
<div style="position:absolute;left:1144.00px;top:233.80px;width:7.00px;height:1.60px;background:#a6a6a6;"></div>
<div class="t" style="left:1094.00px;top:226.10px;width:50px;text-align:right;font-size:15.8px;color:#dcdcdc;">0,7</div>
<div style="position:absolute;left:1806.60px;top:670.00px;width:1.60px;height:7.00px;background:#a6a6a6;"></div>
<div class="t" style="left:1782.40px;top:679.00px;width:50px;text-align:center;font-size:15.8px;color:#dcdcdc;">0,8</div>
<div style="position:absolute;left:1144.00px;top:171.60px;width:7.00px;height:1.60px;background:#a6a6a6;"></div>
<div class="t" style="left:1094.00px;top:163.90px;width:50px;text-align:right;font-size:15.8px;color:#dcdcdc;">0,8</div>
<div style="position:absolute;left:1601.8px;top:154.8px;width:232px;height:195px;background:linear-gradient(33deg,#d0ff00 0%,#ffff10 30%,#ffd000 49.6%,#8a8a00 50%,#8a7a00 100%);"></div>
<canvas id="cv2" width="232" height="195" style="position:absolute;left:1601.8px;top:154.8px;"></canvas>
<svg style="position:absolute;left:0;top:0" width="1920" height="1039"><rect x="1452.7" y="456.3" width="14.6" height="14.6" fill="none" stroke="rgba(255,255,255,0.9)" stroke-width="1.9"/><rect x="1507.5" y="456.3" width="14.6" height="14.6" fill="none" stroke="rgba(255,255,255,0.9)" stroke-width="1.9"/><rect x="1556.6" y="456.3" width="14.6" height="14.6" fill="none" stroke="rgba(255,255,255,0.9)" stroke-width="1.9"/><rect x="1608.6" y="456.3" width="14.6" height="14.6" fill="none" stroke="rgba(255,255,255,0.9)" stroke-width="1.9"/><rect x="1668.4" y="456.3" width="14.6" height="14.6" fill="none" stroke="rgba(255,255,255,0.9)" stroke-width="1.9"/><rect x="1397.3" y="422.4" width="14.6" height="14.6" fill="none" stroke="rgba(255,255,255,0.9)" stroke-width="1.9"/><rect x="1395.9" y="389.6" width="14.6" height="14.6" fill="none" stroke="rgba(255,255,255,0.9)" stroke-width="1.9"/><rect x="1393.3" y="358.3" width="14.6" height="14.6" fill="none" stroke="rgba(255,255,255,0.9)" stroke-width="1.9"/><rect x="1391.9" y="324.7" width="14.6" height="14.6" fill="none" stroke="rgba(255,255,255,0.9)" stroke-width="1.9"/><rect x="1388.6" y="288.6" width="14.6" height="14.6" fill="none" stroke="rgba(255,255,255,0.9)" stroke-width="1.9"/><rect x="1373.0" y="491.3" width="14.6" height="14.6" fill="none" stroke="rgba(255,255,255,0.9)" stroke-width="1.9"/><rect x="1346.7" y="524.6" width="14.6" height="14.6" fill="none" stroke="rgba(255,255,255,0.9)" stroke-width="1.9"/><rect x="1320.4" y="556.3" width="14.6" height="14.6" fill="none" stroke="rgba(255,255,255,0.9)" stroke-width="1.9"/><rect x="1294.6" y="588.3" width="14.6" height="14.6" fill="none" stroke="rgba(255,255,255,0.9)" stroke-width="1.9"/><rect x="1265.5" y="624.6" width="14.6" height="14.6" fill="none" stroke="rgba(255,255,255,0.9)" stroke-width="1.9"/><rect x="1387.1" y="458.0" width="14.6" height="14.6" fill="none" stroke="rgba(255,255,255,0.9)" stroke-width="1.9"/><rect x="1371.9" y="458.0" width="14.6" height="14.6" fill="none" stroke="rgba(255,255,255,0.9)" stroke-width="1.9"/><rect x="1357.7" y="458.0" width="14.6" height="14.6" fill="none" stroke="rgba(255,255,255,0.9)" stroke-width="1.9"/><rect x="1342.7" y="458.0" width="14.6" height="14.6" fill="none" stroke="rgba(255,255,255,0.9)" stroke-width="1.9"/><rect x="1327.5" y="458.0" width="14.6" height="14.6" fill="none" stroke="rgba(255,255,255,0.9)" stroke-width="1.9"/><rect x="1402.2" y="479.6" width="14.6" height="14.6" fill="none" stroke="rgba(255,255,255,0.9)" stroke-width="1.9"/><rect x="1402.9" y="502.4" width="14.6" height="14.6" fill="none" stroke="rgba(255,255,255,0.9)" stroke-width="1.9"/><rect x="1403.3" y="521.6" width="14.6" height="14.6" fill="none" stroke="rgba(255,255,255,0.9)" stroke-width="1.9"/><rect x="1404.7" y="543.4" width="14.6" height="14.6" fill="none" stroke="rgba(255,255,255,0.9)" stroke-width="1.9"/><rect x="1406.3" y="566.4" width="14.6" height="14.6" fill="none" stroke="rgba(255,255,255,0.9)" stroke-width="1.9"/><rect x="1418.1" y="434.5" width="14.6" height="14.6" fill="none" stroke="rgba(255,255,255,0.9)" stroke-width="1.9"/><rect x="1434.7" y="411.2" width="14.6" height="14.6" fill="none" stroke="rgba(255,255,255,0.9)" stroke-width="1.9"/><rect x="1452.5" y="391.4" width="14.6" height="14.6" fill="none" stroke="rgba(255,255,255,0.9)" stroke-width="1.9"/><rect x="1468.7" y="370.8" width="14.6" height="14.6" fill="none" stroke="rgba(255,255,255,0.9)" stroke-width="1.9"/><rect x="1487.2" y="347.2" width="14.6" height="14.6" fill="none" stroke="rgba(255,255,255,0.9)" stroke-width="1.9"/><rect x="1400.1" y="457.7" width="14.6" height="14.6" fill="none" stroke="#000" stroke-width="2.2"/><circle cx="1446.9" cy="460.8" r="4.6" fill="rgba(96,96,96,0.5)" stroke="rgba(0,0,0,0.85)" stroke-width="1.6"/><circle cx="1490" cy="458" r="4.6" fill="rgba(96,96,96,0.5)" stroke="rgba(0,0,0,0.85)" stroke-width="1.6"/><circle cx="1536.6" cy="453.5" r="4.6" fill="rgba(96,96,96,0.5)" stroke="rgba(0,0,0,0.85)" stroke-width="1.6"/><circle cx="1581.5" cy="450.5" r="4.6" fill="rgba(96,96,96,0.5)" stroke="rgba(0,0,0,0.85)" stroke-width="1.6"/><circle cx="1626.6" cy="447.7" r="4.6" fill="rgba(96,96,96,0.5)" stroke="rgba(0,0,0,0.85)" stroke-width="1.6"/><circle cx="1404.6" cy="434.7" r="4.6" fill="rgba(96,96,96,0.5)" stroke="rgba(0,0,0,0.85)" stroke-width="1.6"/><circle cx="1407.6" cy="410" r="4.6" fill="rgba(96,96,96,0.5)" stroke="rgba(0,0,0,0.85)" stroke-width="1.6"/><circle cx="1410.3" cy="381.2" r="4.6" fill="rgba(96,96,96,0.5)" stroke="rgba(0,0,0,0.85)" stroke-width="1.6"/><circle cx="1413.3" cy="349.2" r="4.6" fill="rgba(96,96,96,0.5)" stroke="rgba(0,0,0,0.85)" stroke-width="1.6"/><circle cx="1414.7" cy="318.5" r="4.6" fill="rgba(96,96,96,0.5)" stroke="rgba(0,0,0,0.85)" stroke-width="1.6"/><circle cx="1375.8" cy="492.5" r="4.6" fill="rgba(96,96,96,0.5)" stroke="rgba(0,0,0,0.85)" stroke-width="1.6"/><circle cx="1351.4" cy="518.4" r="4.6" fill="rgba(96,96,96,0.5)" stroke="rgba(0,0,0,0.85)" stroke-width="1.6"/><circle cx="1326.3" cy="544.4" r="4.6" fill="rgba(96,96,96,0.5)" stroke="rgba(0,0,0,0.85)" stroke-width="1.6"/><circle cx="1300.5" cy="573.3" r="4.6" fill="rgba(96,96,96,0.5)" stroke="rgba(0,0,0,0.85)" stroke-width="1.6"/><circle cx="1275.8" cy="599.6" r="4.6" fill="rgba(96,96,96,0.5)" stroke="rgba(0,0,0,0.85)" stroke-width="1.6"/><circle cx="1390" cy="465.2" r="4.6" fill="rgba(96,96,96,0.5)" stroke="rgba(0,0,0,0.85)" stroke-width="1.6"/><circle cx="1378.7" cy="465.2" r="4.6" fill="rgba(96,96,96,0.5)" stroke="rgba(0,0,0,0.85)" stroke-width="1.6"/><circle cx="1366.9" cy="466.9" r="4.6" fill="rgba(96,96,96,0.5)" stroke="rgba(0,0,0,0.85)" stroke-width="1.6"/><circle cx="1353.7" cy="466.9" r="4.6" fill="rgba(96,96,96,0.5)" stroke="rgba(0,0,0,0.85)" stroke-width="1.6"/><circle cx="1341" cy="468.1" r="4.6" fill="rgba(96,96,96,0.5)" stroke="rgba(0,0,0,0.85)" stroke-width="1.6"/><circle cx="1400" cy="482.4" r="4.6" fill="rgba(96,96,96,0.5)" stroke="rgba(0,0,0,0.85)" stroke-width="1.6"/><circle cx="1399" cy="498.6" r="4.6" fill="rgba(96,96,96,0.5)" stroke="rgba(0,0,0,0.85)" stroke-width="1.6"/><circle cx="1397.4" cy="512.7" r="4.6" fill="rgba(96,96,96,0.5)" stroke="rgba(0,0,0,0.85)" stroke-width="1.6"/><circle cx="1396" cy="531.5" r="4.6" fill="rgba(96,96,96,0.5)" stroke="rgba(0,0,0,0.85)" stroke-width="1.6"/><circle cx="1394.4" cy="549.1" r="4.6" fill="rgba(96,96,96,0.5)" stroke="rgba(0,0,0,0.85)" stroke-width="1.6"/><circle cx="1420.4" cy="443.2" r="4.6" fill="rgba(96,96,96,0.5)" stroke="rgba(0,0,0,0.85)" stroke-width="1.6"/><circle cx="1438" cy="424.6" r="4.6" fill="rgba(96,96,96,0.5)" stroke="rgba(0,0,0,0.85)" stroke-width="1.6"/><circle cx="1455.7" cy="407" r="4.6" fill="rgba(96,96,96,0.5)" stroke="rgba(0,0,0,0.85)" stroke-width="1.6"/><circle cx="1474" cy="386.8" r="4.6" fill="rgba(96,96,96,0.5)" stroke="rgba(0,0,0,0.85)" stroke-width="1.6"/><circle cx="1493.1" cy="365" r="4.6" fill="rgba(96,96,96,0.5)" stroke="rgba(0,0,0,0.85)" stroke-width="1.6"/><circle cx="1400.4" cy="465" r="4.6" fill="#fff" stroke="rgba(0,0,0,0.8)" stroke-width="1.6"/><rect x="1601" y="154" width="233" height="196.5" fill="none" stroke="#a0a0a0" stroke-width="1.6"/><rect x="1709" y="244.5" width="14.6" height="14.6" fill="none" stroke="rgba(255,255,255,0.95)" stroke-width="2"/><circle cx="1708.6" cy="322.5" r="4.6" fill="rgba(96,96,96,0.5)" stroke="rgba(0,0,0,0.85)" stroke-width="1.6"/></svg>
<div class="t" style="left:91.00px;top:742.00px;font-size:31.5px;color:#f2f2f2;letter-spacing:0.35px;">Current Reading</div>
<div class="t" style="left:91.00px;top:791.00px;font-size:27.5px;color:#f2f2f2;letter-spacing:-0.38px;">x: 0,4175</div>
<div class="t" style="left:91.00px;top:834.30px;font-size:27.5px;color:#f2f2f2;letter-spacing:-0.35px;">y: 0,487</div>
<div class="t" style="left:91.00px;top:877.60px;font-size:27.5px;color:#f2f2f2;letter-spacing:-0.43px;">fL: 38,44</div>
<div class="t" style="left:91.00px;top:920.90px;font-size:27.5px;color:#f2f2f2;letter-spacing:0.15px;">cd/m²: 131,7</div>
<div class="t" style="left:473.00px;top:729.50px;width:200px;text-align:center;font-size:15px;color:#e0e0e0;">RGB Balance</div>
<div style="position:absolute;left:453.00px;top:749.50px;width:269.50px;height:190.50px;background:#262626;"></div>
<div style="position:absolute;left:453.00px;top:748.70px;width:269.50px;height:1.60px;background:#a6a6a6;"></div>
<div style="position:absolute;left:452.20px;top:749.50px;width:1.60px;height:197.50px;background:#a6a6a6;"></div>
<div style="position:absolute;left:721.70px;top:749.50px;width:1.60px;height:197.50px;background:#a6a6a6;"></div>
<div style="position:absolute;left:453.00px;top:939.20px;width:269.50px;height:1.60px;background:#a6a6a6;"></div>
<div style="position:absolute;left:446.00px;top:765.40px;width:276.50px;height:1.60px;background:#a6a6a6;"></div>
<div class="t" style="left:398.00px;top:756.20px;width:48px;text-align:right;font-size:16.8px;color:#dcdcdc;">50</div>
<div style="position:absolute;left:446.00px;top:844.80px;width:276.50px;height:1.60px;background:#a6a6a6;"></div>
<div class="t" style="left:398.00px;top:835.60px;width:48px;text-align:right;font-size:16.8px;color:#dcdcdc;">0</div>
<div style="position:absolute;left:446.00px;top:925.50px;width:276.50px;height:1.60px;background:#a6a6a6;"></div>
<div class="t" style="left:398.00px;top:916.30px;width:48px;text-align:right;font-size:16.8px;color:#dcdcdc;">-50</div>
<div style="position:absolute;left:479.80px;top:835.50px;width:71.50px;height:11.00px;background:#000;"></div>
<div style="position:absolute;left:481.00px;top:836.70px;width:69.20px;height:8.50px;background:linear-gradient(#ff2020,#ee0000 60%,#c80000);"></div>
<div style="position:absolute;left:551.30px;top:845.00px;width:72.40px;height:4.50px;background:#000;"></div>
<div style="position:absolute;left:552.50px;top:845.80px;width:70.00px;height:2.50px;background:#1a6a1a;"></div>
<div style="position:absolute;left:625.00px;top:760.00px;width:71.50px;height:86.50px;background:#000;"></div>
<div style="position:absolute;left:626.20px;top:761.20px;width:69.20px;height:84.00px;background:linear-gradient(#3838ff,#0000ff 22%,#0000f0 60%,#0000a0 88%,#000070);"></div>
<div class="t" style="left:547.00px;top:943.00px;width:80px;text-align:center;font-size:15.5px;color:#dcdcdc;">100%</div>
<div style="position:absolute;left:745.00px;top:724.00px;width:21.00px;height:214.50px;background:linear-gradient(90deg,#1c1c1c,#262626);"></div>
<div style="position:absolute;left:745.00px;top:724.00px;width:21.00px;height:32.60px;background:#000;"></div>
<div style="position:absolute;left:766.00px;top:724.00px;width:747.00px;height:32.60px;background:linear-gradient(#303030 0,#2c2c2c 50%,#141414 52%,#0e0e0e 100%);"></div>
<div class="t" style="left:943.00px;top:731.00px;font-size:19px;color:#f4f4f4;letter-spacing:1.9px;-webkit-text-stroke:0.45px #f4f4f4;">20%</div>
<div class="t" style="left:1058.00px;top:731.00px;font-size:19px;color:#f4f4f4;letter-spacing:1.9px;-webkit-text-stroke:0.45px #f4f4f4;">40%</div>
<div class="t" style="left:1173.50px;top:731.00px;font-size:19px;color:#f4f4f4;letter-spacing:1.9px;-webkit-text-stroke:0.45px #f4f4f4;">60%</div>
<div class="t" style="left:1288.50px;top:731.00px;font-size:19px;color:#f4f4f4;letter-spacing:1.9px;-webkit-text-stroke:0.45px #f4f4f4;">80%</div>
<div class="t" style="left:1404.00px;top:731.00px;font-size:19px;color:#f4f4f4;letter-spacing:1.9px;-webkit-text-stroke:0.45px #f4f4f4;">100%</div>
<div style="position:absolute;left:766.00px;top:756.60px;width:747.00px;height:30.52px;background:linear-gradient(#464646,#3a3a3a);"></div>
<div style="position:absolute;left:745.00px;top:756.60px;width:21.00px;height:30.32px;background:linear-gradient(90deg,#1e1e1e,#2a2a2a);"></div>
<div class="t" style="left:772.50px;top:761.10px;font-size:19.8px;color:#f4f4f4;letter-spacing:1.75px;">x: CIE31</div>
<div class="t" style="left:943.00px;top:761.10px;font-size:19.8px;color:#f4f4f4;letter-spacing:2.45px;">0,3292</div>
<div class="t" style="left:1058.00px;top:761.10px;font-size:19.8px;color:#f4f4f4;letter-spacing:2.45px;">0,3509</div>
<div class="t" style="left:1173.50px;top:761.10px;font-size:19.8px;color:#f4f4f4;letter-spacing:2.45px;">0,3714</div>
<div class="t" style="left:1288.50px;top:761.10px;font-size:19.8px;color:#f4f4f4;letter-spacing:2.45px;">0,3943</div>
<div class="t" style="left:1404.00px;top:761.10px;font-size:19.8px;color:#f4f4f4;letter-spacing:2.45px;">0,4175</div>
<div style="position:absolute;left:766.00px;top:786.92px;width:747.00px;height:30.52px;background:linear-gradient(#8e8e8e,#7e7e7e);"></div>
<div style="position:absolute;left:745.00px;top:786.92px;width:21.00px;height:30.32px;background:linear-gradient(90deg,#1e1e1e,#2a2a2a);"></div>
<div class="t" style="left:772.50px;top:791.42px;font-size:19.8px;color:#f4f4f4;letter-spacing:1.75px;">y: CIE31</div>
<div class="t" style="left:943.00px;top:791.42px;font-size:19.8px;color:#f4f4f4;letter-spacing:2.45px;">0,3620</div>
<div class="t" style="left:1058.00px;top:791.42px;font-size:19.8px;color:#f4f4f4;letter-spacing:2.45px;">0,3927</div>
<div class="t" style="left:1173.50px;top:791.42px;font-size:19.8px;color:#f4f4f4;letter-spacing:2.45px;">0,4218</div>
<div class="t" style="left:1288.50px;top:791.42px;font-size:19.8px;color:#f4f4f4;letter-spacing:2.45px;">0,4541</div>
<div class="t" style="left:1404.00px;top:791.42px;font-size:19.8px;color:#f4f4f4;letter-spacing:2.45px;">0,4870</div>
<div style="position:absolute;left:766.00px;top:817.23px;width:747.00px;height:30.52px;background:linear-gradient(#464646,#3a3a3a);"></div>
<div style="position:absolute;left:745.00px;top:817.23px;width:21.00px;height:30.32px;background:linear-gradient(90deg,#1e1e1e,#2a2a2a);"></div>
<div class="t" style="left:772.50px;top:821.73px;font-size:19.8px;color:#f4f4f4;letter-spacing:1.75px;">Y</div>
<div class="t" style="left:943.00px;top:821.73px;font-size:19.8px;color:#f4f4f4;letter-spacing:2.45px;">148,2758</div>
<div class="t" style="left:1058.00px;top:821.73px;font-size:19.8px;color:#f4f4f4;letter-spacing:2.45px;">143,1032</div>
<div class="t" style="left:1173.50px;top:821.73px;font-size:19.8px;color:#f4f4f4;letter-spacing:2.45px;">139,1358</div>
<div class="t" style="left:1288.50px;top:821.73px;font-size:19.8px;color:#f4f4f4;letter-spacing:2.45px;">135,4755</div>
<div class="t" style="left:1404.00px;top:821.73px;font-size:19.8px;color:#f4f4f4;letter-spacing:2.45px;">131,7013</div>
<div style="position:absolute;left:766.00px;top:847.55px;width:747.00px;height:30.52px;background:linear-gradient(#8e8e8e,#7e7e7e);"></div>
<div style="position:absolute;left:745.00px;top:847.55px;width:21.00px;height:30.32px;background:linear-gradient(90deg,#1e1e1e,#2a2a2a);"></div>
<div class="t" style="left:772.50px;top:852.05px;font-size:19.8px;color:#f4f4f4;letter-spacing:1.75px;">Target x:CIE31</div>
<div class="t" style="left:943.00px;top:852.05px;font-size:19.8px;color:#f4f4f4;letter-spacing:2.45px;">0,3344</div>
<div class="t" style="left:1058.00px;top:852.05px;font-size:19.8px;color:#f4f4f4;letter-spacing:2.45px;">0,3564</div>
<div class="t" style="left:1173.50px;top:852.05px;font-size:19.8px;color:#f4f4f4;letter-spacing:2.45px;">0,3773</div>
<div class="t" style="left:1288.50px;top:852.05px;font-size:19.8px;color:#f4f4f4;letter-spacing:2.45px;">0,3969</div>
<div class="t" style="left:1404.00px;top:852.05px;font-size:19.8px;color:#f4f4f4;letter-spacing:2.45px;">0,4193</div>
<div style="position:absolute;left:766.00px;top:877.87px;width:747.00px;height:30.52px;background:linear-gradient(#464646,#3a3a3a);"></div>
<div style="position:absolute;left:745.00px;top:877.87px;width:21.00px;height:30.32px;background:linear-gradient(90deg,#1e1e1e,#2a2a2a);"></div>
<div class="t" style="left:772.50px;top:882.37px;font-size:19.8px;color:#f4f4f4;letter-spacing:1.75px;">Target y:CIE31</div>
<div class="t" style="left:943.00px;top:882.37px;font-size:19.8px;color:#f4f4f4;letter-spacing:2.45px;">0,3648</div>
<div class="t" style="left:1058.00px;top:882.37px;font-size:19.8px;color:#f4f4f4;letter-spacing:2.45px;">0,4013</div>
<div class="t" style="left:1173.50px;top:882.37px;font-size:19.8px;color:#f4f4f4;letter-spacing:2.45px;">0,4358</div>
<div class="t" style="left:1288.50px;top:882.37px;font-size:19.8px;color:#f4f4f4;letter-spacing:2.45px;">0,4682</div>
<div class="t" style="left:1404.00px;top:882.37px;font-size:19.8px;color:#f4f4f4;letter-spacing:2.45px;">0,5053</div>
<div style="position:absolute;left:766.00px;top:908.18px;width:747.00px;height:30.52px;background:linear-gradient(#8e8e8e,#7e7e7e);"></div>
<div style="position:absolute;left:745.00px;top:908.18px;width:21.00px;height:30.32px;background:linear-gradient(90deg,#1e1e1e,#2a2a2a);"></div>
<div class="t" style="left:772.50px;top:912.68px;font-size:19.8px;color:#f4f4f4;letter-spacing:1.75px;">Target Y</div>
<div class="t" style="left:943.00px;top:912.68px;font-size:19.8px;color:#f4f4f4;letter-spacing:2.45px;">138,2678</div>
<div class="t" style="left:1058.00px;top:912.68px;font-size:19.8px;color:#f4f4f4;letter-spacing:2.45px;">135,8408</div>
<div class="t" style="left:1173.50px;top:912.68px;font-size:19.8px;color:#f4f4f4;letter-spacing:2.45px;">133,9760</div>
<div class="t" style="left:1288.50px;top:912.68px;font-size:19.8px;color:#f4f4f4;letter-spacing:2.45px;">132,5125</div>
<div class="t" style="left:1404.00px;top:912.68px;font-size:19.8px;color:#f4f4f4;letter-spacing:2.45px;">131,0976</div>
<div style="position:absolute;left:0.00px;top:968.50px;width:1920.00px;height:70.50px;background:linear-gradient(#4a4a4a,#3a3a3a 30%,#2c2c2c);"></div>
<div style="position:absolute;left:1.00px;top:969.00px;width:50.00px;height:70.00px;border-radius:4px 4px 0 0;background:linear-gradient(#8c8c8c,#5e5e5e);"></div>
<div style="position:absolute;left:18.00px;top:971.00px;width:18.00px;height:18.00px;border-radius:50%;background:radial-gradient(circle at 50% 60%,#7a7a7a,#4e4e4e);"></div>
<svg style="position:absolute;left:21px;top:975px" width="12" height="8"><path d="M0 7 L6 0 L12 7Z" fill="#222"/></svg>
<div style="position:absolute;left:7.00px;top:998.50px;width:39.50px;height:34.00px;border-radius:4px;background:#ffff00;box-shadow:0 0 0 1px #8a8a40;"></div>
<div style="position:absolute;left:59.00px;top:969.00px;width:170.00px;height:70.00px;border-radius:4px 4px 0 0;background:linear-gradient(#a8a8a8,#8a8a8a 40%,#6a6a6a);"></div>
<div style="position:absolute;left:65.00px;top:975.00px;width:158.00px;height:40.00px;border-radius:4px;background:#c2c2a6;box-shadow:0 0 0 1px #8e8e50, inset 0 1px 1px rgba(0,0,0,.25);"></div>
<div class="t" style="left:59.00px;top:1021.50px;width:170px;text-align:center;font-size:11.5px;color:#2a2a2a;font-weight:bold;">20%</div>
<div style="position:absolute;left:230.50px;top:969.00px;width:170.00px;height:70.00px;border-radius:4px 4px 0 0;background:linear-gradient(#a8a8a8,#8a8a8a 40%,#6a6a6a);"></div>
<div style="position:absolute;left:236.50px;top:975.00px;width:158.00px;height:40.00px;border-radius:4px;background:#c2c189;box-shadow:0 0 0 1px #8e8e50, inset 0 1px 1px rgba(0,0,0,.25);"></div>
<div class="t" style="left:230.50px;top:1021.50px;width:170px;text-align:center;font-size:11.5px;color:#2a2a2a;font-weight:bold;">40%</div>
<div style="position:absolute;left:402.00px;top:969.00px;width:170.00px;height:70.00px;border-radius:4px 4px 0 0;background:linear-gradient(#a8a8a8,#8a8a8a 40%,#6a6a6a);"></div>
<div style="position:absolute;left:408.00px;top:975.00px;width:158.00px;height:40.00px;border-radius:4px;background:#c3c16d;box-shadow:0 0 0 1px #8e8e50, inset 0 1px 1px rgba(0,0,0,.25);"></div>
<div class="t" style="left:402.00px;top:1021.50px;width:170px;text-align:center;font-size:11.5px;color:#2a2a2a;font-weight:bold;">60%</div>
<div style="position:absolute;left:573.50px;top:969.00px;width:170.00px;height:70.00px;border-radius:4px 4px 0 0;background:linear-gradient(#a8a8a8,#8a8a8a 40%,#6a6a6a);"></div>
<div style="position:absolute;left:579.50px;top:975.00px;width:158.00px;height:40.00px;border-radius:4px;background:#c2bf4a;box-shadow:0 0 0 1px #8e8e50, inset 0 1px 1px rgba(0,0,0,.25);"></div>
<div class="t" style="left:573.50px;top:1021.50px;width:170px;text-align:center;font-size:11.5px;color:#2a2a2a;font-weight:bold;">80%</div>
<div style="position:absolute;left:745.50px;top:969.00px;width:170.00px;height:70.00px;border-radius:4px 4px 0 0;background:linear-gradient(#1c1c1c,#262626);"></div>
<div style="position:absolute;left:751.50px;top:975.00px;width:158.00px;height:40.00px;border-radius:4px;background:#c4c000;box-shadow:0 0 0 1px #4a4a00;"></div>
<div class="t" style="left:745.50px;top:1021.50px;width:170px;text-align:center;font-size:11.5px;color:#f4f4f4;font-weight:bold;">100%</div>
<div style="position:absolute;left:1563.50px;top:969.00px;width:54.00px;height:70.00px;border-radius:4px 4px 0 0;background:linear-gradient(#9a9a9a,#6a6a6a);"></div>
<div style="position:absolute;left:1563.50px;top:989.00px;width:54.00px;height:1.50px;background:#5a5a5a;"></div>
<div style="position:absolute;left:1581.00px;top:971.00px;width:18.00px;height:18.00px;border-radius:50%;background:radial-gradient(circle at 50% 60%,#8a8a8a,#5a5a5a);"></div>
<svg style="position:absolute;left:1585px;top:975px" width="10" height="7"><path d="M0 7 L5 0 L10 7Z" fill="#222"/></svg>
<div style="position:absolute;left:1573.50px;top:997.00px;width:33.50px;height:33.50px;box-sizing:border-box;border:2.5px solid #1a1a1a;border-radius:5px;background:linear-gradient(#8c8c8c,#6c6c6c);"></div>
<div style="position:absolute;left:1582.50px;top:1006.50px;width:15.50px;height:15.00px;background:#000;"></div>
<div style="position:absolute;left:1619.00px;top:969.00px;width:51.00px;height:33.00px;background:linear-gradient(#a4a4a4,#727272);"></div>
<div style="position:absolute;left:1634.00px;top:974.50px;width:22.00px;height:22.00px;border-radius:50%;background:radial-gradient(circle at 50% 65%,#9a9a9a,#6e6e6e);"></div>
<div style="position:absolute;left:1671.00px;top:969.00px;width:50.00px;height:33.00px;background:linear-gradient(#a4a4a4,#727272);"></div>
<div style="position:absolute;left:1685.50px;top:974.50px;width:22.00px;height:22.00px;border-radius:50%;background:radial-gradient(circle at 50% 65%,#9a9a9a,#6e6e6e);"></div>
<div style="position:absolute;left:1722.00px;top:969.00px;width:49.60px;height:33.00px;background:linear-gradient(#a4a4a4,#727272);"></div>
<div style="position:absolute;left:1736.30px;top:974.50px;width:22.00px;height:22.00px;border-radius:50%;background:radial-gradient(circle at 50% 65%,#9a9a9a,#6e6e6e);"></div>
<div style="position:absolute;left:1772.60px;top:969.00px;width:49.70px;height:33.00px;background:linear-gradient(#a4a4a4,#727272);"></div>
<div style="position:absolute;left:1786.95px;top:974.50px;width:22.00px;height:22.00px;border-radius:50%;background:radial-gradient(circle at 50% 65%,#9a9a9a,#6e6e6e);"></div>
<div style="position:absolute;left:1823.30px;top:969.00px;width:49.70px;height:33.00px;background:linear-gradient(#a4a4a4,#727272);"></div>
<div style="position:absolute;left:1837.65px;top:974.50px;width:22.00px;height:22.00px;border-radius:50%;background:radial-gradient(circle at 50% 65%,#9a9a9a,#6e6e6e);"></div>
<svg style="position:absolute;left:0;top:0" width="1920" height="1039"><rect x="1640.5" y="981.5" width="8" height="8" fill="#222"/><path d="M1693 980 L1701 986 L1693 992Z" fill="#222"/><path d="M1742 980.5 h-2.5 v11 h2.5 M1752 980.5 h2.5 v11 h-2.5" stroke="#222" stroke-width="1.8" fill="none"/><circle cx="1745" cy="986" r="0.9" fill="#222"/><circle cx="1749" cy="986" r="0.9" fill="#222"/><path d="M1798 986 c-2 -3 -6 -3 -6 0 c0 3 4 3 6 0 c2 -3 6 -3 6 0 c0 3 -4 3 -6 0z" stroke="#222" stroke-width="1.8" fill="none"/><path d="M1843.5 984 a5 5 0 0 1 9 -1 M1854 988 a5 5 0 0 1 -9 1" stroke="#222" stroke-width="2" fill="none"/><path d="M1853.5 979.5 v4.5 h-4.5z M1843.5 992.5 v-4.5 h4.5z" fill="#222"/></svg>
<div style="position:absolute;left:1874.00px;top:969.00px;width:46.00px;height:33.00px;background:linear-gradient(#262626,#303030);"></div>
<div style="position:absolute;left:1888.00px;top:973.00px;width:24.00px;height:24.00px;border-radius:50%;background:radial-gradient(circle at 50% 40%,#1c1c1c,#2e2e2e);"></div>
<div style="position:absolute;left:1619.00px;top:1004.00px;width:152.50px;height:35.00px;background:linear-gradient(#a8a8a8,#7a7a7a);"></div>
<div style="position:absolute;left:1772.50px;top:1004.00px;width:147.50px;height:35.00px;background:linear-gradient(#a8a8a8,#7a7a7a);"></div>
<div style="position:absolute;left:1642.00px;top:1010.00px;width:22.00px;height:22.00px;border-radius:50%;background:radial-gradient(circle at 50% 65%,#a0a0a0,#747474);"></div>
<div style="position:absolute;left:1883.00px;top:1010.00px;width:22.00px;height:22.00px;border-radius:50%;background:radial-gradient(circle at 50% 65%,#a0a0a0,#747474);"></div>
<div class="t" style="left:1645.50px;top:1007.00px;font-size:22px;color:#2e2e2e;font-weight:bold;">«</div>
<div class="t" style="left:1887.50px;top:1007.00px;font-size:22px;color:#2e2e2e;font-weight:bold;">»</div>
<div class="t" style="left:1684.00px;top:1006.50px;font-size:24.5px;color:#2e2e2e;letter-spacing:0.6px;-webkit-text-stroke:0.7px #2e2e2e;">Back</div>
<div class="t" style="left:1804.00px;top:1006.50px;font-size:24.5px;color:#2e2e2e;letter-spacing:1.9px;-webkit-text-stroke:0.7px #2e2e2e;">Next</div>
<script>
(function(){
var L=[[0.1741, 0.005], [0.17408, 0.00499], [0.17405, 0.00498], [0.17402, 0.00497], [0.17398, 0.00496], [0.17394, 0.00494], [0.1739, 0.00493], [0.17385, 0.00491], [0.1738, 0.0049], [0.17375, 0.00489], [0.17369, 0.00487], [0.17364, 0.00486], [0.17358, 0.00484], [0.17351, 0.00483], [0.17344, 0.00482], [0.17337, 0.00481], [0.1733, 0.0048], [0.17323, 0.00479], [0.17315, 0.00479], [0.17307, 0.00478], [0.17299, 0.00477], [0.17291, 0.00477], [0.17281, 0.00478], [0.17271, 0.00478], [0.1726, 0.0048], [0.17247, 0.00482], [0.17233, 0.00484], [0.17218, 0.00487], [0.17203, 0.00491], [0.17186, 0.00495], [0.1717, 0.00499], [0.17155, 0.00504], [0.1714, 0.0051], [0.17126, 0.00517], [0.17112, 0.00524], [0.17099, 0.00532], [0.17086, 0.0054], [0.17073, 0.00549], [0.17059, 0.00559], [0.17045, 0.00569], [0.1703, 0.0058], [0.17014, 0.00591], [0.16999, 0.00603], [0.16982, 0.00616], [0.16966, 0.00629], [0.16948, 0.00643], [0.1693, 0.00657], [0.16911, 0.00673], [0.1689, 0.0069], [0.16868, 0.00708], [0.16845, 0.00727], [0.16822, 0.00747], [0.16797, 0.00767], [0.16771, 0.00789], [0.16745, 0.00812], [0.16718, 0.00835], [0.1669, 0.0086], [0.16662, 0.00885], [0.16633, 0.00912], [0.16603, 0.00939], [0.16573, 0.00968], [0.16542, 0.00997], [0.16509, 0.01027], [0.16475, 0.01058], [0.1644, 0.0109], [0.16403, 0.01123], [0.16366, 0.01156], [0.16327, 0.0119], [0.16287, 0.01225], [0.16246, 0.01261], [0.16203, 0.01299], [0.16158, 0.01339], [0.1611, 0.0138], [0.1606, 0.01423], [0.16009, 0.01468], [0.15955, 0.01514], [0.15899, 0.01562], [0.15842, 0.01611], [0.15783, 0.01662], [0.15722, 0.01715], [0.1566, 0.0177], [0.15596, 0.01826], [0.15531, 0.01883], [0.15464, 0.01941], [0.15396, 0.02001], [0.15325, 0.02063], [0.15252, 0.02128], [0.15177, 0.02197], [0.151, 0.0227], [0.1502, 0.02346], [0.14938, 0.02423], [0.14854, 0.02504], [0.14768, 0.02588], [0.1468, 0.02675], [0.14589, 0.02768], [0.14496, 0.02866], [0.144, 0.0297], [0.14303, 0.03077], [0.14205, 0.03184], [0.14105, 0.03295], [0.14002, 0.03412], [0.13897, 0.03537], [0.13786, 0.03673], [0.13671, 0.03823], [0.1355, 0.0399], [0.13423, 0.04169], [0.13293, 0.04357], [0.13157, 0.04556], [0.13018, 0.04767], [0.12873, 0.04994], [0.12724, 0.05236], [0.12569, 0.05498], [0.1241, 0.0578], [0.12246, 0.06078], [0.12078, 0.06387], [0.11906, 0.06712], [0.11728, 0.07055], [0.11545, 0.0742], [0.11356, 0.0781], [0.11162, 0.08229], [0.1096, 0.0868], [0.10752, 0.09158], [0.10539, 0.09657], [0.1032, 0.1018], [0.10096, 0.10731], [0.09864, 0.11313], [0.09627, 0.11928], [0.09382, 0.12579], [0.0913, 0.1327], [0.08869, 0.13996], [0.08597, 0.14753], [0.08317, 0.15543], [0.08031, 0.16367], [0.07742, 0.1723], [0.0745, 0.18133], [0.07159, 0.19079], [0.0687, 0.2007], [0.06581, 0.21107], [0.06289, 0.22188], [0.05995, 0.23311], [0.05701, 0.24474], [0.05407, 0.25677], [0.05114, 0.26916], [0.04825, 0.28191], [0.0454, 0.295], [0.04255, 0.30854], [0.03967, 0.32259], [0.03679, 0.33707], [0.03395, 0.35189], [0.03117, 0.36695], [0.02848, 0.38216], [0.02591, 0.39744], [0.0235, 0.4127], [0.0212, 0.42809], [0.01895, 0.44378], [0.0168, 0.45966], [0.01475, 0.47563], [0.01284, 0.49159], [0.0111, 0.50744], [0.00954, 0.52308], [0.0082, 0.5384], [0.00704, 0.55354], [0.00602, 0.56865], [0.00515, 0.58365], [0.00447, 0.59849], [0.00398, 0.6131], [0.00371, 0.62739], [0.00368, 0.64132], [0.0039, 0.6548], [0.00436, 0.66796], [0.00504, 0.68091], [0.00594, 0.69359], [0.00707, 0.70591], [0.00842, 0.71781], [0.01001, 0.7292], [0.01183, 0.74003], [0.0139, 0.7502], [0.01624, 0.75981], [0.01885, 0.76895], [0.02172, 0.77759], [0.02481, 0.7857], [0.0281, 0.79323], [0.03157, 0.80015], [0.03517, 0.80642], [0.0389, 0.812], [0.0428, 0.81684], [0.04691, 0.82095], [0.05122, 0.8244], [0.05567, 0.82724], [0.06024, 0.82954], [0.06489, 0.83135], [0.06959, 0.83276], [0.0743, 0.8338], [0.07907, 0.83434], [0.08394, 0.83426], [0.08891, 0.83366], [0.09393, 0.83263], [0.099, 0.83127], [0.10408, 0.82968], [0.10915, 0.82796], [0.1142, 0.8262], [0.11925, 0.8243], [0.12434, 0.82211], [0.12944, 0.81969], [0.13456, 0.81709], [0.13965, 0.81436], [0.14472, 0.81155], [0.14974, 0.80872], [0.1547, 0.8059], [0.1596, 0.80307], [0.16445, 0.80018], [0.16926, 0.79721], [0.17404, 0.79419], [0.17879, 0.79111], [0.18351, 0.78798], [0.18821, 0.78481], [0.1929, 0.7816], [0.19756, 0.77835], [0.20219, 0.77505], [0.20679, 0.7717], [0.21137, 0.76831], [0.21594, 0.76487], [0.2205, 0.76139], [0.22505, 0.75786], [0.2296, 0.7543], [0.23415, 0.75069], [0.23869, 0.74704], [0.24323, 0.74334], [0.24776, 0.73959], [0.25228, 0.73582], [0.25679, 0.732], [0.2613, 0.72816], [0.2658, 0.7243], [0.27029, 0.72041], [0.27478, 0.71647], [0.27926, 0.71251], [0.28373, 0.70851], [0.2882, 0.70449], [0.29267, 0.70045], [0.29713, 0.69638], [0.3016, 0.6923], [0.30607, 0.6882], [0.31053, 0.68407], [0.31499, 0.67992], [0.31945, 0.67575], [0.32391, 0.67156], [0.32837, 0.66735], [0.33283, 0.66313], [0.3373, 0.6589], [0.34177, 0.65465], [0.34625, 0.65038], [0.35073, 0.6461], [0.35521, 0.64179], [0.35969, 0.63748], [0.36416, 0.63316], [0.36863, 0.62883], [0.3731, 0.6245], [0.37756, 0.62016], [0.38202, 0.61581], [0.38647, 0.61145], [0.39093, 0.60708], [0.39537, 0.60271], [0.39982, 0.59834], [0.40426, 0.59397], [0.4087, 0.5896], [0.41314, 0.58523], [0.41758, 0.58087], [0.42202, 0.57649], [0.42646, 0.57212], [0.43089, 0.56776], [0.4353, 0.5634], [0.43971, 0.55904], [0.4441, 0.5547], [0.44848, 0.55036], [0.45285, 0.54603], [0.45721, 0.54169], [0.46156, 0.53737], [0.46589, 0.53305], [0.47021, 0.52875], [0.47452, 0.52447], [0.4788, 0.5202], [0.48307, 0.51595], [0.48733, 0.5117], [0.49157, 0.50747], [0.4958, 0.50326], [0.50001, 0.49906], [0.5042, 0.49488], [0.50836, 0.49073], [0.5125, 0.4866], [0.51662, 0.48249], [0.52072, 0.4784], [0.5248, 0.47433], [0.52886, 0.47029], [0.53289, 0.46627], [0.53689, 0.46228], [0.54086, 0.45832], [0.5448, 0.4544], [0.54871, 0.45051], [0.5526, 0.44665], [0.55646, 0.44282], [0.56029, 0.43902], [0.56408, 0.43525], [0.56783, 0.43153], [0.57154, 0.42784], [0.5752, 0.4242], [0.57882, 0.42059], [0.5824, 0.41701], [0.58594, 0.41347], [0.58944, 0.40996], [0.59289, 0.40651], [0.59629, 0.40311], [0.59963, 0.39977], [0.6029, 0.3965], [0.6061, 0.3933], [0.60925, 0.39017], [0.61233, 0.3871], [0.61536, 0.38409], [0.61833, 0.38112], [0.62126, 0.37821], [0.62415, 0.37534], [0.627, 0.3725], [0.62981, 0.3697], [0.63259, 0.36693], [0.63532, 0.36421], [0.63801, 0.36154], [0.64064, 0.35891], [0.64322, 0.35635], [0.64574, 0.35384], [0.6482, 0.3514], [0.65059, 0.34903], [0.65293, 0.34672], [0.65521, 0.34447], [0.65743, 0.34227], [0.6596, 0.34014], [0.66172, 0.33805], [0.66378, 0.336], [0.6658, 0.334], [0.66777, 0.33204], [0.66968, 0.33014], [0.67153, 0.32828], [0.67334, 0.32648], [0.67509, 0.32471], [0.67681, 0.323], [0.67847, 0.32133], [0.6801, 0.3197], [0.68168, 0.31812], [0.68321, 0.31659], [0.68469, 0.31511], [0.68613, 0.31367], [0.68752, 0.31227], [0.68888, 0.31091], [0.6902, 0.30959], [0.6915, 0.3083], [0.69276, 0.30705], [0.69398, 0.30584], [0.69516, 0.30467], [0.69631, 0.30354], [0.69742, 0.30245], [0.69851, 0.30137], [0.69956, 0.30033], [0.7006, 0.2993], [0.70161, 0.2983], [0.70258, 0.29733], [0.70352, 0.29639], [0.70444, 0.29547], [0.70533, 0.29457], [0.7062, 0.2937], [0.70706, 0.29284], [0.7079, 0.292], [0.70873, 0.29117], [0.70954, 0.29036], [0.71032, 0.28958], [0.71109, 0.28881], [0.71185, 0.28805], [0.71258, 0.28732], [0.7133, 0.2866], [0.714, 0.2859], [0.71466, 0.28524], [0.71528, 0.28462], [0.71587, 0.28403], [0.71644, 0.28345], [0.71703, 0.28287], [0.71764, 0.28226], [0.71829, 0.28161], [0.719, 0.2809], [0.7198, 0.28011], [0.72068, 0.27924], [0.72161, 0.27832], [0.72256, 0.27739], [0.72351, 0.27646], [0.72441, 0.27557], [0.72525, 0.27474], [0.726, 0.274], [0.72665, 0.27336], [0.72722, 0.27278], [0.72775, 0.27226], [0.72823, 0.27178], [0.72868, 0.27133], [0.72911, 0.27089], [0.72955, 0.27045], [0.73, 0.27], [0.73047, 0.26953], [0.73094, 0.26906], [0.73141, 0.26859], [0.73187, 0.26813], [0.73231, 0.26769], [0.73271, 0.26729], [0.73308, 0.26692], [0.7334, 0.2666], [0.73367, 0.26633], [0.7339, 0.2661], [0.7341, 0.2659], [0.73426, 0.26574], [0.7344, 0.2656], [0.73452, 0.26548], [0.73461, 0.26539], [0.7347, 0.2653]];
function rgb(x,y,inside){
  var X=x/y,Z=(1-x-y)/y;
  var r=3.2406*X-1.5372-0.4986*Z, g=-0.9689*X+1.8758+0.0415*Z, b=0.0557*X-0.2040+1.0570*Z;
  var ins = r>=0&&g>=0&&b>=0;
  if(r<0)r=0; if(g<0)g=0; if(b<0)b=0;
  var m=Math.max(r,g,b); r/=m; g/=m; b/=m;
  function gm(v){return v<=0.0031308?12.92*v:1.055*Math.pow(v,1/2.4)-0.055;}
  if(ins){ return [Math.pow(r,1/1.2)*255,Math.pow(g,1/1.2)*255,Math.pow(b,1/1.2)*255]; }
  var k=0.6;
  return [Math.pow(r,1.15)*255*k, Math.pow(g,1.15)*255*k, Math.pow(b,1.15)*255*k];
}
function draw(id, W, H, fx, fy){
  var c=document.getElementById(id); if(!c) return;
  var ctx=c.getContext('2d');
  var m=document.createElement('canvas'); m.width=W; m.height=H;
  var mc=m.getContext('2d');
  mc.beginPath();
  for(var i=0;i<L.length;i++){ var p=L[i]; var px=fx(p[0]), py=fy(p[1]); if(i==0) mc.moveTo(px,py); else mc.lineTo(px,py);} 
  mc.closePath(); mc.fillStyle='#fff'; mc.fill();
  var mask=mc.getImageData(0,0,W,H).data;
  var img=ctx.createImageData(W,H); var d=img.data;
  var inv = fx.inv, invy = fy.inv;
  for(var j=0;j<H;j++){
    var yy=invy(j+0.5);
    for(var i2=0;i2<W;i2++){
      var o=(j*W+i2)*4; var a=mask[o+3];
      if(a==0) continue;
      var xx=inv(i2+0.5);
      var c3=rgb(xx,yy);
      d[o]=c3[0]; d[o+1]=c3[1]; d[o+2]=c3[2]; d[o+3]=a;
    }
  }
  ctx.putImageData(img,0,0);
}
var ox=1151.000000, oy=147.000000;
var fx=function(x){return 1150.6+x*821-ox;}; fx.inv=function(px){return (px+ox-1150.6)/821;};
var fy=function(y){return 670-y*622-oy;}; fy.inv=function(py){return (670-(py+oy))/622;};
draw('cv', 690, 523, fx, fy);
var ix=1601.8, iy=154.8, cxp=1717.5, cyp=252.2, tx=0.4193, ty=0.5053, sx=4700, sy=3900;
var gx=function(x){return cxp+(x-tx)*sx-ix;}; gx.inv=function(px){return tx+(px+ix-cxp)/sx;};
var gy=function(y){return cyp-(y-ty)*sy-iy;}; gy.inv=function(py){return ty-(py+iy-cyp)/sy;};
draw('cv2', 232, 195, gx, gy);
})();
</script>
</body></html>
